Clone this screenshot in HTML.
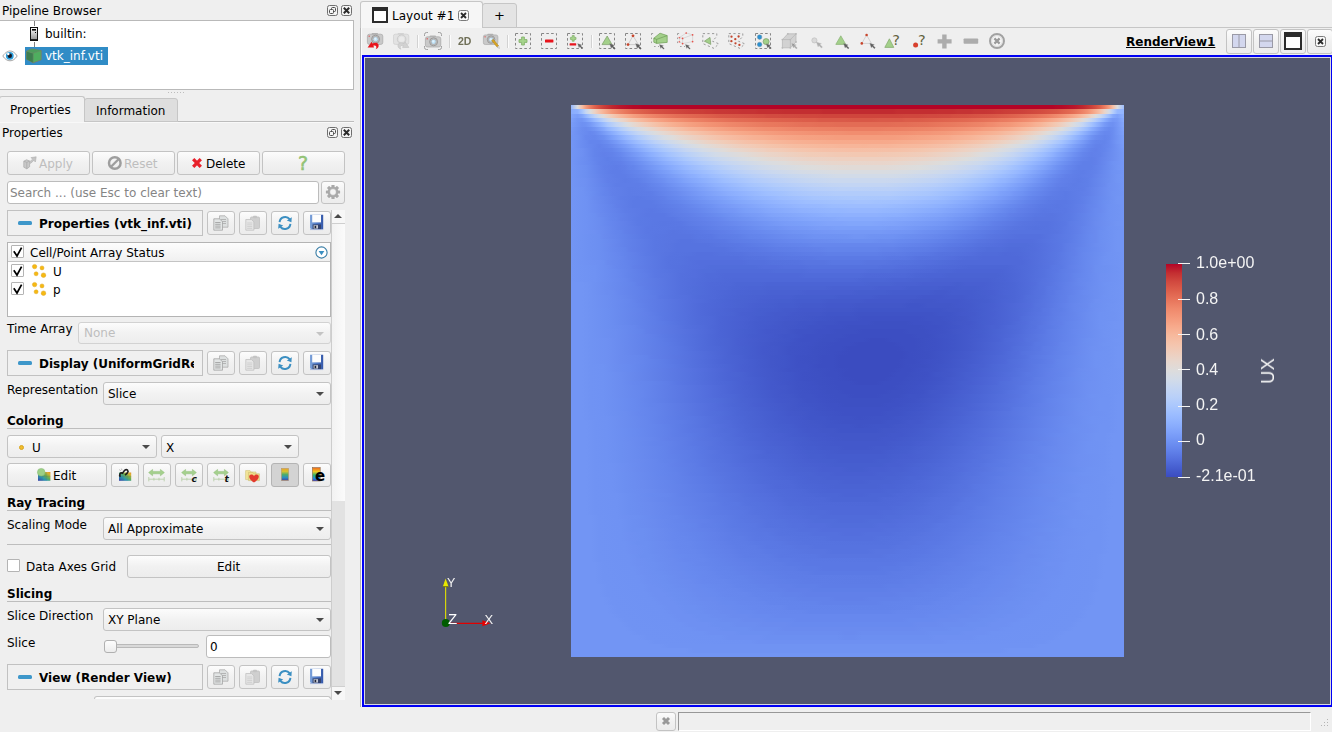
<!DOCTYPE html>
<html><head><meta charset="utf-8"><title>ParaView</title>
<style>
*{box-sizing:border-box}
html,body{margin:0;padding:0}
body{width:1332px;height:732px;overflow:hidden;background:#efefef;font-family:"DejaVu Sans","Liberation Sans",sans-serif;font-size:12px;color:#000;position:relative}
.a{position:absolute}
.t{position:absolute;white-space:nowrap;line-height:14px;margin-top:1px}
.b{font-weight:bold}
.btn{position:absolute;border:1px solid #c3c3c3;border-radius:3px;background:linear-gradient(#fcfcfc,#f1f1f1 50%,#ececec)}
.dis{color:#bebebe}
.cb{position:absolute;width:13px;height:13px;border:1px solid #b4b4b4;background:#fff;border-radius:1px}
.combo{position:absolute;border:1px solid #c3c3c3;border-radius:3px;background:linear-gradient(#fcfcfc,#f2f2f2 50%,#ededed)}
.combo i{position:absolute;right:6px;top:9px;width:0;height:0;border-left:4px solid transparent;border-right:4px solid transparent;border-top:4px solid #4a4a4a}
.hdr{position:absolute;border:1px solid #c1c1c1;background:#f0f0f0}
.sep{position:absolute;height:1px;background:#bdbdbd;left:7px;width:324px}
svg{position:absolute;overflow:visible}
.hm div{position:absolute;left:0;width:100%}
.vt{font-family:"Liberation Sans",sans-serif;font-size:16px;line-height:18px;color:#f4f4f4;will-change:transform}
.gs{will-change:transform}
</style></head><body>

<!-- ===== Pipeline browser ===== -->
<div class="t" style="left:2px;top:3px">Pipeline Browser</div>
<div class="a" style="left:-1px;top:20px;width:355px;height:70px;background:#fff;border:1px solid #b9b9b9"></div>
<div class="a" style="left:34px;top:21px;width:1px;height:5px;background:#808080"></div>
<div class="a" style="left:34px;top:42px;width:1px;height:6px;background:#808080"></div>
<div class="t" style="left:45px;top:26px">builtin:</div>
<div class="a" style="left:25px;top:47px;width:83px;height:18px;background:#308cc6"></div>
<div class="t" style="left:45px;top:48px;color:#fff">vtk_inf.vti</div>
<svg style="left:30px;top:27px" width="8" height="14" viewBox="0 0 8 14">
 <defs><linearGradient id="srv" x1="0" y1="0" x2="0" y2="1"><stop offset="0" stop-color="#fff"/><stop offset="1" stop-color="#8e8e8e"/></linearGradient></defs>
 <rect x=".5" y=".5" width="7" height="13" fill="url(#srv)" stroke="#111"/>
 <rect x="2" y="2" width="4" height="1.6" fill="#000"/>
 <rect x="5" y="5" width="1" height="1" fill="#000"/>
 <rect x="1" y="12" width="6" height="1" fill="#222"/>
</svg>
<svg style="left:26px;top:48px" width="16" height="16" viewBox="0 0 16 16">
 <path d="M.6 3.2L5.6 .9L15.2 2.6L15.2 11.8L7.2 14.8L.6 11.2Z" fill="#4fae5f" stroke="#7b7d6c" stroke-width=".9" stroke-linejoin="round"/>
 <path d="M.6 3.2L7.2 5.2L7.2 14.8L.6 11.2Z" fill="#3d7f50"/>
 <path d="M.6 3.2L5.6 .9L15.2 2.6L7.2 5.2Z" fill="#4c9d5c"/>
 <path d="M.6 3.2L7.2 5.2L15.2 2.6M7.2 5.2L7.2 14.8" fill="none" stroke="#6c8a66" stroke-width=".6"/>
</svg>
<svg style="left:2px;top:50px" width="16" height="12" viewBox="0 0 16 12">
 <path d="M.8 6C3.5 2 6.5 1 8 1C10.5 1 13 2.6 15.2 6C13 9.4 10.5 10.8 8 10.8C5.5 10.8 3 9.4 .8 6Z" fill="#fff" stroke="#9a9a9a" stroke-width=".9"/>
 <circle cx="7.8" cy="5.8" r="3.9" fill="#2b9ddb"/>
 <circle cx="7.8" cy="5.8" r="2.2" fill="#15151f"/>
 <circle cx="6.3" cy="4" r="1.2" fill="#fff"/>
</svg>


<!-- ===== tabs ===== -->
<div class="a" style="left:0;top:121px;width:354px;height:1px;background:#bcbcbc"></div><div class="a" style="left:0;top:122px;width:354px;height:1px;background:#f8f8f8"></div>
<div class="a" style="left:84px;top:98px;width:94px;height:24px;background:#dedede;border:1px solid #c6c6c6;border-radius:3px 3px 0 0"></div>
<div class="a" style="left:-1px;top:96px;width:86px;height:26px;background:#f1f1f1;border:1px solid #c6c6c6;border-bottom:none;border-radius:3px 3px 0 0"></div>
<div class="t" style="left:10px;top:102px">Properties</div>
<div class="t" style="left:96px;top:103px">Information</div>
<div class="t" style="left:2px;top:125px">Properties</div>

<!-- dock buttons -->
<svg style="left:326px;top:4px" width="28" height="13" viewBox="0 0 28 13">
 <rect x="1.5" y="1.5" width="10" height="10" rx="2" fill="#f4f4f4" stroke="#6e6e6e"/>
 <rect x="5.5" y="3.5" width="4" height="4" rx="1" fill="none" stroke="#4a4a4a"/>
 <rect x="3.5" y="5.5" width="4" height="4" rx="1" fill="#f4f4f4" stroke="#4a4a4a"/>
 <rect x="15.5" y="1.5" width="10" height="10" rx="2" fill="#f4f4f4" stroke="#6e6e6e"/>
 <path d="M17.8 3.8l5.4 5.4M23.2 3.8l-5.4 5.4" stroke="#2a2a2a" stroke-width="2"/>
</svg>
<svg style="left:326px;top:126px" width="28" height="13" viewBox="0 0 28 13">
 <rect x="1.5" y="1.5" width="10" height="10" rx="2" fill="#f4f4f4" stroke="#6e6e6e"/>
 <rect x="5.5" y="3.5" width="4" height="4" rx="1" fill="none" stroke="#4a4a4a"/>
 <rect x="3.5" y="5.5" width="4" height="4" rx="1" fill="#f4f4f4" stroke="#4a4a4a"/>
 <rect x="15.5" y="1.5" width="10" height="10" rx="2" fill="#f4f4f4" stroke="#6e6e6e"/>
 <path d="M17.8 3.8l5.4 5.4M23.2 3.8l-5.4 5.4" stroke="#2a2a2a" stroke-width="2"/>
</svg>
<!-- splitter dots -->
<div class="a" style="left:168px;top:92px;width:18px;height:1px;background:repeating-linear-gradient(90deg,#bdbdbd 0 1px,transparent 1px 3px)"></div>

<!-- Apply/Reset/Delete/? -->
<div class="btn" style="left:7px;top:151px;width:83px;height:24px"></div>
<div class="t dis" style="left:39px;top:156px">Apply</div>
<div class="btn" style="left:92px;top:151px;width:83px;height:24px"></div>
<div class="t dis" style="left:124px;top:156px">Reset</div>
<div class="btn" style="left:177px;top:151px;width:83px;height:24px"></div>
<div class="t" style="left:206px;top:156px">Delete</div>
<div class="btn" style="left:262px;top:151px;width:83px;height:24px"></div>

<!-- search -->
<div class="a" style="left:7px;top:181px;width:312px;height:23px;background:#fff;border:1px solid #bcbcbc;border-radius:3px"></div>
<div class="t" style="left:10px;top:185px;color:#858585">Search ... (use Esc to clear text)</div>
<div class="btn" style="left:321px;top:181px;width:24px;height:23px"></div>

<!-- Properties header -->
<div class="hdr" style="left:7px;top:210px;width:196px;height:26px"></div>
<div class="a" style="left:18px;top:221px;width:14px;height:4px;border-radius:1.5px;background:#3e97ca"></div>
<div class="t b" style="left:39px;top:216px">Properties (vtk_inf.vti)</div>
<div class="btn" style="left:207px;top:211px;width:28px;height:24px"></div>
<div class="btn" style="left:239px;top:211px;width:28px;height:24px"></div>
<div class="btn" style="left:271px;top:211px;width:28px;height:24px"></div>
<div class="btn" style="left:303px;top:211px;width:28px;height:24px"></div>

<!-- array list -->
<div class="a" style="left:7px;top:242px;width:324px;height:75px;background:#fff;border:1px solid #b4b4b4"></div>
<div class="a" style="left:8px;top:243px;width:322px;height:19px;background:linear-gradient(#fdfdfd,#f0f0f0);border-bottom:1px solid #c4c4c4"></div>
<div class="cb" style="left:11px;top:245px"></div>
<div class="t" style="left:30px;top:245px">Cell/Point Array Status</div>
<div class="cb" style="left:11px;top:264px"></div>
<div class="t" style="left:53px;top:264px">U</div>
<div class="cb" style="left:11px;top:282px"></div>
<div class="t" style="left:53px;top:282px">p</div>

<!-- time array -->
<div class="t" style="left:7px;top:321px">Time Array</div>
<div class="combo" style="left:78px;top:322px;width:253px;height:22px;border-color:#d2d2d2"><i style="border-top-color:#c4c4c4"></i></div>
<div class="t dis" style="left:84px;top:325px">None</div>

<!-- Display header -->
<div class="hdr" style="left:7px;top:350px;width:196px;height:26px"></div>
<div class="a" style="left:18px;top:361px;width:14px;height:4px;border-radius:1.5px;background:#3e97ca"></div>
<div class="t b" style="left:39px;top:356px;width:154.500px;overflow:hidden">Display (UniformGridRepresentation)</div>
<div class="btn" style="left:207px;top:351px;width:28px;height:24px"></div>
<div class="btn" style="left:239px;top:351px;width:28px;height:24px"></div>
<div class="btn" style="left:271px;top:351px;width:28px;height:24px"></div>
<div class="btn" style="left:303px;top:351px;width:28px;height:24px"></div>

<!-- Representation -->
<div class="t" style="left:7px;top:382px">Representation</div>
<div class="combo" style="left:103px;top:382px;width:228px;height:23px"><i></i></div>
<div class="t" style="left:108px;top:386px">Slice</div>

<!-- Coloring -->
<div class="t b" style="left:7px;top:413px">Coloring</div>
<div class="sep" style="top:428px"></div>
<div class="combo" style="left:7px;top:435px;width:150px;height:23px"><i></i></div>
<div class="a" style="left:19px;top:445px;width:5px;height:5px;border-radius:50%;background:#f0bc2e;border:1px solid #d8a520"></div>
<div class="t" style="left:32px;top:440px">U</div>
<div class="combo" style="left:161px;top:435px;width:138px;height:23px"><i></i></div>
<div class="t" style="left:166px;top:440px">X</div>

<div class="btn" style="left:7px;top:463px;width:100px;height:24px"></div>
<div class="t" style="left:53px;top:468px">Edit</div>
<div class="btn" style="left:111px;top:463px;width:28px;height:24px"></div>
<div class="btn" style="left:143px;top:463px;width:28px;height:24px"></div>
<div class="btn" style="left:175px;top:463px;width:28px;height:24px"></div>
<div class="btn" style="left:207px;top:463px;width:28px;height:24px"></div>
<div class="btn" style="left:239px;top:463px;width:28px;height:24px"></div>
<div class="btn" style="left:271px;top:463px;width:28px;height:24px;background:#d3d3d3;border-color:#b4b4b4"></div>
<div class="btn" style="left:303px;top:463px;width:28px;height:24px"></div>

<!-- Ray tracing -->
<div class="t b" style="left:7px;top:495px">Ray Tracing</div>
<div class="sep" style="top:510px"></div>
<div class="t" style="left:7px;top:517px">Scaling Mode</div>
<div class="combo" style="left:103px;top:517px;width:228px;height:23px"><i></i></div>
<div class="t" style="left:108px;top:521px">All Approximate</div>
<div class="sep" style="top:544px"></div>

<!-- Data axes grid -->
<div class="cb" style="left:7px;top:559px"></div>
<div class="t" style="left:26px;top:559px">Data Axes Grid</div>
<div class="btn" style="left:127px;top:555px;width:204px;height:23px"></div>
<div class="t" style="left:217px;top:559px">Edit</div>

<!-- Slicing -->
<div class="t b" style="left:7px;top:586px">Slicing</div>
<div class="sep" style="top:601px"></div>
<div class="t" style="left:7px;top:608px">Slice Direction</div>
<div class="combo" style="left:103px;top:608px;width:228px;height:23px"><i></i></div>
<div class="t" style="left:108px;top:612px">XY Plane</div>
<div class="t" style="left:7px;top:635px">Slice</div>
<div class="a" style="left:105px;top:644px;width:94px;height:4px;background:#d9d9d9;border:1px solid #b9b9b9;border-radius:2px"></div>
<div class="a" style="left:104px;top:640px;width:13px;height:13px;background:linear-gradient(#fdfdfd,#ececec);border:1px solid #b0b0b0;border-radius:3px"></div>
<div class="a" style="left:206px;top:635px;width:125px;height:23px;background:#fff;border:1px solid #bcbcbc;border-radius:3px"></div>
<div class="t" style="left:210px;top:639px">0</div>

<!-- View header -->
<div class="hdr" style="left:7px;top:664px;width:196px;height:26px"></div>
<div class="a" style="left:18px;top:675px;width:14px;height:4px;border-radius:1.5px;background:#3e97ca"></div>
<div class="t b" style="left:39px;top:670px">View (Render View)</div>
<div class="btn" style="left:207px;top:665px;width:28px;height:24px"></div>
<div class="btn" style="left:239px;top:665px;width:28px;height:24px"></div>
<div class="btn" style="left:271px;top:665px;width:28px;height:24px"></div>
<div class="btn" style="left:303px;top:665px;width:28px;height:24px"></div>
<div class="a" style="left:94px;top:696px;width:237px;height:3px;border:1px solid #c3c3c3;border-bottom:none;border-radius:3px 3px 0 0;background:#fcfcfc"></div>
<!-- apply icon -->
<svg style="left:23px;top:156px" width="14" height="14" viewBox="0 0 14 14">
 <path d="M.8 5.2L3.6 3.8L6.6 5L6.6 10.8L3.8 12.8L.8 11.2Z" fill="#c9c9c9" stroke="#adadad" stroke-width=".8"/>
 <path d="M.8 5.2L3.8 6.4L6.6 5M3.8 6.4L3.8 12.8" fill="none" stroke="#a9a9a9" stroke-width=".7"/>
 <path d="M6.2 6.2L9.6 3.2L8 1.6L13.2 .8L12.4 6L10.8 4.4L7.6 7.4Z" fill="#c4c4c4" stroke="#b0b0b0" stroke-width=".6"/>
</svg>
<!-- reset icon -->
<svg style="left:107px;top:155px" width="16" height="16" viewBox="0 0 16 16">
 <circle cx="7.8" cy="8" r="5.8" fill="none" stroke="#9e9e9e" stroke-width="2.5"/>
 <path d="M11.8 4L3.8 12" stroke="#9e9e9e" stroke-width="2.4"/>
</svg>
<!-- delete icon -->
<svg style="left:191px;top:157px" width="12" height="12" viewBox="0 0 12 12">
 <path d="M2.2 2.2L9.8 9.8M9.8 2.2L2.2 9.8" stroke="#e8212b" stroke-width="3.3" stroke-linecap="butt"/>
</svg>
<!-- help ? -->
<div class="t" style="left:298px;top:152px;font-size:19px;line-height:20px;color:#96c878;-webkit-text-stroke:.5px #8cbc6e">?</div>
<!-- gear -->
<svg style="left:325px;top:184px" width="16" height="16" viewBox="-8 -8 16 16">
 <g fill="#a9a9a9">
  <rect x="-1.600" y="-7.100" width="3.200" height="14.200" rx=".7"/>
  <rect x="-1.600" y="-7.100" width="3.200" height="14.200" rx=".7" transform="rotate(45)"/>
  <rect x="-1.600" y="-7.100" width="3.200" height="14.200" rx=".7" transform="rotate(90)"/>
  <rect x="-1.600" y="-7.100" width="3.200" height="14.200" rx=".7" transform="rotate(135)"/>
  <circle r="5.300"/>
 </g>
 <circle r="3.400" fill="#f3f3f3"/>
 <circle r="3.400" fill="none" stroke="#8f8f8f" stroke-width=".5"/>
</svg>
<svg style="left:213px;top:215px" width="16" height="16" viewBox="0 0 16 16">
 <path d="M6.5 .8h5.5l3 3v8.400h-8.500z" fill="#dde0e0" stroke="#a6a6a6" stroke-width=".7"/>
 <path d="M8 4.500h5M8 6.500h5M8 8.500h5" stroke="#aaa" stroke-width=".8"/>
 <path d="M.8 3.800h5.700l3 3v8.400h-8.700z" fill="#e2e5e5" stroke="#9c9c9c" stroke-width=".7"/>
 <path d="M2.200 7.500h5.400M2.200 9.300h5.400M2.200 11.100h5.400M2.200 12.900h5.400" stroke="#9a9a9a" stroke-width=".8"/>
</svg>
<svg style="left:245px;top:215px" width="16" height="16" viewBox="0 0 16 16">
 <rect x="5.500" y="2" width="9" height="11.500" rx="1" fill="#cfcfcf" stroke="#c0c0c0" stroke-width=".8"/>
 <rect x="8" y=".8" width="4" height="2.400" rx=".8" fill="#c4c4c4"/>
 <path d="M.8 4.500h5.700l2.400 2.400v8.300h-8.100z" fill="#e6e6e6" stroke="#c2c2c2" stroke-width=".8"/>
 <path d="M2.200 8h5M2.200 9.800h5M2.200 11.600h5M2.200 13.400h5" stroke="#cacaca" stroke-width=".8"/>
</svg>
<svg style="left:277px;top:215px" width="16" height="16" viewBox="0 0 16 16">
 <path d="M2.600 7.200A5.600 5.600 0 0 1 12.600 4.200" fill="none" stroke="#3b8fc2" stroke-width="2"/>
 <path d="M14.800 2.200L14.400 7.200L9.800 5.400Z" fill="#3b8fc2"/>
 <path d="M13.400 8.800A5.600 5.600 0 0 1 3.400 11.800" fill="none" stroke="#3b8fc2" stroke-width="2"/>
 <path d="M1.200 13.800L1.600 8.800L6.200 10.600Z" fill="#3b8fc2"/>
</svg>
<svg style="left:309px;top:214px" width="16" height="16" viewBox="0 0 16 16">
 <path d="M1 .8h13.200v14.400h-12l-1.200-1.200z" fill="url(#sav)"/>
 <rect x="3.200" y=".8" width="8.800" height="7.600" fill="#fdfdfd"/>
 <rect x="3.600" y="10.400" width="8.400" height="4.800" fill="#34436e"/>
 <rect x="4.600" y="11.200" width="4.400" height="3.400" fill="#c9ccd6"/><rect x="5.600" y="11.800" width="1.600" height="2.400" fill="#1e2436"/>
 <path d="M1 15.600h13.200" stroke="#9eb0d8" stroke-width=".8"/>
</svg>
<svg style="left:213px;top:355px" width="16" height="16" viewBox="0 0 16 16">
 <path d="M6.5 .8h5.5l3 3v8.400h-8.500z" fill="#dde0e0" stroke="#a6a6a6" stroke-width=".7"/>
 <path d="M8 4.500h5M8 6.500h5M8 8.500h5" stroke="#aaa" stroke-width=".8"/>
 <path d="M.8 3.800h5.700l3 3v8.400h-8.700z" fill="#e2e5e5" stroke="#9c9c9c" stroke-width=".7"/>
 <path d="M2.200 7.500h5.400M2.200 9.300h5.400M2.200 11.100h5.400M2.200 12.900h5.400" stroke="#9a9a9a" stroke-width=".8"/>
</svg>
<svg style="left:245px;top:355px" width="16" height="16" viewBox="0 0 16 16">
 <rect x="5.500" y="2" width="9" height="11.500" rx="1" fill="#cfcfcf" stroke="#c0c0c0" stroke-width=".8"/>
 <rect x="8" y=".8" width="4" height="2.400" rx=".8" fill="#c4c4c4"/>
 <path d="M.8 4.500h5.700l2.400 2.400v8.300h-8.100z" fill="#e6e6e6" stroke="#c2c2c2" stroke-width=".8"/>
 <path d="M2.200 8h5M2.200 9.800h5M2.200 11.600h5M2.200 13.400h5" stroke="#cacaca" stroke-width=".8"/>
</svg>
<svg style="left:277px;top:355px" width="16" height="16" viewBox="0 0 16 16">
 <path d="M2.600 7.200A5.600 5.600 0 0 1 12.600 4.200" fill="none" stroke="#3b8fc2" stroke-width="2"/>
 <path d="M14.800 2.200L14.400 7.200L9.800 5.400Z" fill="#3b8fc2"/>
 <path d="M13.400 8.800A5.600 5.600 0 0 1 3.400 11.800" fill="none" stroke="#3b8fc2" stroke-width="2"/>
 <path d="M1.200 13.800L1.600 8.800L6.200 10.600Z" fill="#3b8fc2"/>
</svg>
<svg style="left:309px;top:354px" width="16" height="16" viewBox="0 0 16 16">
 <path d="M1 .8h13.200v14.400h-12l-1.200-1.200z" fill="url(#sav)"/>
 <rect x="3.200" y=".8" width="8.800" height="7.600" fill="#fdfdfd"/>
 <rect x="3.600" y="10.400" width="8.400" height="4.800" fill="#34436e"/>
 <rect x="4.600" y="11.200" width="4.400" height="3.400" fill="#c9ccd6"/><rect x="5.600" y="11.800" width="1.600" height="2.400" fill="#1e2436"/>
 <path d="M1 15.600h13.200" stroke="#9eb0d8" stroke-width=".8"/>
</svg>
<svg style="left:213px;top:669px" width="16" height="16" viewBox="0 0 16 16">
 <path d="M6.5 .8h5.5l3 3v8.400h-8.500z" fill="#dde0e0" stroke="#a6a6a6" stroke-width=".7"/>
 <path d="M8 4.500h5M8 6.500h5M8 8.500h5" stroke="#aaa" stroke-width=".8"/>
 <path d="M.8 3.800h5.700l3 3v8.400h-8.700z" fill="#e2e5e5" stroke="#9c9c9c" stroke-width=".7"/>
 <path d="M2.200 7.500h5.400M2.200 9.300h5.400M2.200 11.100h5.400M2.200 12.900h5.400" stroke="#9a9a9a" stroke-width=".8"/>
</svg>
<svg style="left:245px;top:669px" width="16" height="16" viewBox="0 0 16 16">
 <rect x="5.500" y="2" width="9" height="11.500" rx="1" fill="#cfcfcf" stroke="#c0c0c0" stroke-width=".8"/>
 <rect x="8" y=".8" width="4" height="2.400" rx=".8" fill="#c4c4c4"/>
 <path d="M.8 4.500h5.700l2.400 2.400v8.300h-8.100z" fill="#e6e6e6" stroke="#c2c2c2" stroke-width=".8"/>
 <path d="M2.200 8h5M2.200 9.800h5M2.200 11.600h5M2.200 13.400h5" stroke="#cacaca" stroke-width=".8"/>
</svg>
<svg style="left:277px;top:669px" width="16" height="16" viewBox="0 0 16 16">
 <path d="M2.600 7.200A5.600 5.600 0 0 1 12.600 4.200" fill="none" stroke="#3b8fc2" stroke-width="2"/>
 <path d="M14.800 2.200L14.400 7.200L9.800 5.400Z" fill="#3b8fc2"/>
 <path d="M13.400 8.800A5.600 5.600 0 0 1 3.400 11.800" fill="none" stroke="#3b8fc2" stroke-width="2"/>
 <path d="M1.200 13.800L1.600 8.800L6.200 10.600Z" fill="#3b8fc2"/>
</svg>
<svg style="left:309px;top:668px" width="16" height="16" viewBox="0 0 16 16">
 <path d="M1 .8h13.200v14.400h-12l-1.200-1.200z" fill="url(#sav)"/>
 <rect x="3.200" y=".8" width="8.800" height="7.600" fill="#fdfdfd"/>
 <rect x="3.600" y="10.400" width="8.400" height="4.800" fill="#34436e"/>
 <rect x="4.600" y="11.200" width="4.400" height="3.400" fill="#c9ccd6"/><rect x="5.600" y="11.800" width="1.600" height="2.400" fill="#1e2436"/>
 <path d="M1 15.600h13.200" stroke="#9eb0d8" stroke-width=".8"/>
</svg>
<!-- coloring row icons -->
<svg width="0" height="0"><defs>
 <linearGradient id="sav" x1="0" y1="0" x2="1" y2="0"><stop offset="0" stop-color="#7fa4da"/><stop offset=".5" stop-color="#4f7ac8"/><stop offset="1" stop-color="#3558a8"/></linearGradient>
 <linearGradient id="rbw" x1="0" y1="1" x2="1" y2="0"><stop offset="0" stop-color="#3a3fa8"/><stop offset=".35" stop-color="#2b9ab0"/><stop offset=".6" stop-color="#6ab04c"/><stop offset=".85" stop-color="#e0b030"/><stop offset="1" stop-color="#e08a2a"/></linearGradient>
 <linearGradient id="rbv" x1="0" y1="0" x2="0" y2="1"><stop offset="0" stop-color="#e9a32a"/><stop offset=".25" stop-color="#d6c230"/><stop offset=".5" stop-color="#4fae6a"/><stop offset=".75" stop-color="#2b8fc0"/><stop offset="1" stop-color="#4a3f9e"/></linearGradient>
 <linearGradient id="rbv2" x1="0" y1="0" x2="0" y2="1"><stop offset="0" stop-color="#f0641e"/><stop offset=".3" stop-color="#f0c81e"/><stop offset=".55" stop-color="#2fb46a"/><stop offset=".8" stop-color="#1e8ce0"/><stop offset="1" stop-color="#3a3ac8"/></linearGradient>
</defs></svg>
<svg style="left:37px;top:468px" width="14" height="13" viewBox="0 0 14 13">
 <rect x="1" y="4" width="12.400" height="8.800" fill="url(#rbw)"/>
 <path d="M5 4v8.800M9.200 4v8.800M1 8.400h12.400" stroke="#5a6a7a" stroke-width=".4" opacity=".6"/>
 <circle cx="4.200" cy="4.200" r="3.800" fill="#9ccf86" stroke="#86b872" stroke-width=".5"/>
</svg>
<svg style="left:118px;top:468px" width="14" height="13" viewBox="0 0 14 13">
 <rect x="1" y="4.500" width="12.200" height="8.300" fill="url(#rbw)"/>
 <path d="M5 4.500v8.300M9.200 4.500v8.300M1 8.600h12.200" stroke="#5a6a7a" stroke-width=".4" opacity=".6"/>
 <path d="M2.600 8.600C.6 7 2.400 4 4.600 5.200M4.200 5.800C6 3 7.500 .4 9.600 2.200C11.200 3.800 8.500 6 7 7" fill="none" stroke="#1e1e1e" stroke-width="1.600"/>
 <path d="M1.200 1.600l1.600 1.200M3.400 .6l.6 1.600" stroke="#8a8a8a" stroke-width=".6"/>
</svg>
<svg style="left:148px;top:469px" width="17" height="13" viewBox="0 0 17 13">
 <path d="M.6 3.600L4.600 .4V2.400H12.400V.4L16.400 3.600L12.400 6.800V4.800H4.600V6.800Z" fill="#a4d08c" stroke="#8fbd78" stroke-width=".5"/>
 <path d="M.8 10.200H16.200M.8 8v4.400M16.200 8v4.400M5.900 8.800v2.800M11 8.800v2.800" stroke="#b9cfa9" stroke-width=".9" fill="none"/>
</svg>
<svg style="left:181px;top:469px" width="17" height="13" viewBox="0 0 17 13">
 <path d="M.6 3.600L4.600 .4V2.400H11.400V.4L15.400 3.600L11.400 6.800V4.800H4.600V6.800Z" fill="#a4d08c" stroke="#8fbd78" stroke-width=".5"/>
 <path d="M.8 10.200H15.200M.8 8v4.400M15.200 8v4.400M5.900 8.800v2.800" stroke="#b9cfa9" stroke-width=".9" fill="none"/>
 <text x="10.400" y="12.600" font-family="DejaVu Sans,sans-serif" font-weight="bold" font-style="italic" font-size="9" fill="#111">c</text>
</svg>
<svg style="left:213px;top:469px" width="17" height="13" viewBox="0 0 17 13">
 <path d="M.6 3.600L4.600 .4V2.400H11.400V.4L15.400 3.600L11.400 6.800V4.800H4.600V6.800Z" fill="#a4d08c" stroke="#8fbd78" stroke-width=".5"/>
 <path d="M.8 10.200H15.200M.8 8v4.400M15.200 8v4.400M5.900 8.800v2.800" stroke="#b9cfa9" stroke-width=".9" fill="none"/>
 <text x="11.400" y="12.600" font-family="DejaVu Sans,sans-serif" font-weight="bold" font-style="italic" font-size="9" fill="#111">t</text>
</svg>
<svg style="left:245px;top:469px" width="16" height="14" viewBox="0 0 16 14">
 <path d="M.6 1.600h4.400l1 1.400h5v7.600h-10.400z" fill="#f3e59a" stroke="#cfc27a" stroke-width=".6"/>
 <path d="M3.400 3.400h4.400l1 1.400h5.600v6.800h-11z" fill="#efe08a" stroke="#c9bb70" stroke-width=".6"/>
 <path d="M9 13.600C5.200 10.800 4.200 9 4.200 7.400C4.200 5.200 7.400 4.600 9 7C10.600 4.600 13.800 5.200 13.800 7.400C13.800 9 12.800 10.800 9 13.600Z" fill="#e23a2e"/>
</svg>
<svg style="left:281px;top:468px" width="8" height="13" viewBox="0 0 8 13">
 <rect x=".4" y=".4" width="7.200" height="12.200" fill="url(#rbv)" stroke="#b89a6a" stroke-width=".6"/>
</svg>
<svg style="left:312px;top:467px" width="14" height="15" viewBox="0 0 14 15">
 <rect x=".4" y=".6" width="7.800" height="13.400" fill="url(#rbv2)" stroke="#8a6a4a" stroke-width=".6"/>
 <text x="3" y="14" font-family="DejaVu Sans,sans-serif" font-weight="bold" font-size="15" fill="#000">e</text>
</svg>
<svg style="left:11px;top:245px" width="13" height="13" viewBox="0 0 13 13"><path d="M2.800 6.200L6 11L10.600 2.600" fill="none" stroke="#000" stroke-width="1.700" stroke-linejoin="miter"/></svg>
<svg style="left:11px;top:264px" width="13" height="13" viewBox="0 0 13 13"><path d="M2.800 6.200L6 11L10.600 2.600" fill="none" stroke="#000" stroke-width="1.700" stroke-linejoin="miter"/></svg>
<svg style="left:11px;top:282px" width="13" height="13" viewBox="0 0 13 13"><path d="M2.800 6.200L6 11L10.600 2.600" fill="none" stroke="#000" stroke-width="1.700" stroke-linejoin="miter"/></svg>
<svg style="left:32px;top:264px" width="14" height="13" viewBox="0 0 14 13"><g fill="#f6b912" stroke="#dfa626" stroke-width=".5"><circle cx="2.600" cy="2.600" r="2.200"/><circle cx="10" cy="3.900" r="2"/><circle cx="4.100" cy="9.800" r="2"/><circle cx="11.500" cy="11.200" r="2.300"/></g></svg>
<svg style="left:32px;top:282px" width="14" height="13" viewBox="0 0 14 13"><g fill="#f6b912" stroke="#dfa626" stroke-width=".5"><circle cx="2.600" cy="2.600" r="2.200"/><circle cx="10" cy="3.900" r="2"/><circle cx="4.100" cy="9.800" r="2"/><circle cx="11.500" cy="11.200" r="2.300"/></g></svg>
<svg style="left:315px;top:246px" width="13" height="13" viewBox="0 0 13 13"><circle cx="6.500" cy="6.500" r="5.600" fill="#fff" stroke="#3a7ea6" stroke-width="1.100"/><path d="M3.600 5L9.400 5L6.500 9.200Z" fill="#3a8fc2"/></svg>

<!-- scroll bar -->
<div class="a" style="left:331px;top:210px;width:14px;height:490px;background:#e2e2e2;border-left:1px solid #cdcdcd"></div>
<div class="a" style="left:332px;top:210px;width:13px;height:14px;background:#f7f7f7;border-bottom:1px solid #cfcfcf"></div>
<div class="a" style="left:332px;top:224px;width:13px;height:277px;background:linear-gradient(90deg,#f2f2f2,#fbfbfb)"></div>
<div class="a" style="left:332px;top:686px;width:13px;height:14px;background:#f7f7f7;border-top:1px solid #cfcfcf"></div>
<div class="a" style="left:334px;top:214px;width:0;height:0;border-left:4px solid transparent;border-right:4px solid transparent;border-bottom:4px solid #4a4a4a"></div>
<div class="a" style="left:334px;top:691px;width:0;height:0;border-left:4px solid transparent;border-right:4px solid transparent;border-top:4px solid #4a4a4a"></div>



<!-- ===== central ===== -->
<!-- tab widget -->
<div class="a" style="left:360px;top:27px;width:972px;height:1px;background:#c6c6c6"></div>
<div class="a" style="left:360px;top:3px;width:1px;height:704px;background:#b6b6b6"></div><div class="a" style="left:361px;top:28px;width:1px;height:679px;background:#fbfbfb"></div>
<div class="a" style="left:482px;top:3px;width:35px;height:25px;background:#e4e4e4;border:1px solid #c6c6c6;border-radius:3px 3px 0 0"></div>
<div class="a" style="left:360px;top:1px;width:123px;height:27px;background:#f6f6f6;border:1px solid #c6c6c6;border-bottom:none;border-radius:3px 3px 0 0"></div>
<div class="t" style="left:392px;top:8px">Layout #1</div>
<div class="t" style="left:494px;top:8px;font-size:13px">+</div>
<svg style="left:372px;top:7px" width="16" height="16" viewBox="0 0 16 16"><rect x="1" y="1" width="14" height="14" fill="#fff" stroke="#2b2b2b" stroke-width="2"/><rect x="0" y="0" width="16" height="4" fill="#2b2b2b"/></svg>
<svg style="left:458px;top:10px" width="11" height="11" viewBox="0 0 11 11"><rect x=".5" y=".5" width="10" height="10" rx="2" fill="#f8f8f8" stroke="#7a7a7a"/><path d="M3 3l5 5M8 3l-5 5" stroke="#2a2a2a" stroke-width="1.8"/></svg>

<!-- toolbar text -->
<div class="t b gs" style="left:458px;top:33px;font-size:10.500px;color:#707058;font-family:'Liberation Sans',sans-serif">2D</div>
<div class="t b" style="left:1126px;top:34px;text-decoration:underline">RenderView1</div>
<div class="btn" style="left:1226px;top:29px;width:26px;height:25px"></div>
<div class="btn" style="left:1253px;top:29px;width:26px;height:25px"></div>
<div class="btn" style="left:1280px;top:29px;width:26px;height:25px"></div>
<div class="btn" style="left:1307px;top:29px;width:26px;height:25px"></div>
<svg width="0" height="0"><defs>
 <g id="cam">
  <rect x="4.600" y="0" width="6.400" height="2" rx=".8" fill="#b5b5b5"/>
  <rect x=".4" y="1.200" width="15.400" height="10.200" rx="2" fill="#c9c9c9" stroke="#a8a8a8" stroke-width=".7"/>
  <circle cx="8.600" cy="6.200" r="4" fill="#bdbdbd" stroke="#969696" stroke-width=".9"/>
  <circle cx="8.600" cy="6.200" r="2.700" fill="#a9a9a9"/>
  <circle cx="8.600" cy="6.200" r="2.200" fill="#bfe1f6"/>
  <circle cx="8.300" cy="5.800" r="1.100" fill="#e4f3fc"/>
  <rect x="1.600" y="2.600" width="1.200" height="1.200" fill="#e05050"/>
 </g>
 <g id="camd" opacity=".45">
  <rect x="4.600" y="0" width="6.400" height="2" rx=".8" fill="#b5b5b5"/>
  <rect x=".4" y="1.200" width="15.400" height="10.200" rx="2" fill="#d4d4d4" stroke="#a8a8a8" stroke-width=".7"/>
  <circle cx="8.600" cy="6.200" r="4.300" fill="#cfcfcf" stroke="#9f9f9f" stroke-width="1"/>
  <circle cx="8.600" cy="6.200" r="2.600" fill="#e6e6e6"/>
 </g>
 <path id="cur" d="M0 0L4.800 1.600L3.400 2.400L5.800 4.800L4.800 5.800L2.400 3.400L1.600 4.800Z" fill="#5e5e5e" stroke="#8a8a8a" stroke-width=".3"/>
 <rect id="dbox" x=".5" y=".5" width="15" height="15" fill="none" stroke="#868686" stroke-width="1" stroke-dasharray="2.600 2.200"/>
</defs></svg>

<!-- 1 camera undo -->
<svg style="left:367px;top:33px" width="17" height="17" viewBox="0 0 17 17">
 <use href="#cam"/>
 <path d="M10.400 10.200C12.800 12 11.600 15.400 8.600 16.200C10.200 13.800 9.200 12.200 6.400 12.400L7 14.600L.6 14.400L4.600 8.800L5.400 10.600C7.400 9.600 9 9.400 10.400 10.200Z" fill="#e8141c"/>
</svg>
<!-- 2 camera redo (disabled) -->
<svg style="left:393px;top:33px" width="17" height="17" viewBox="0 0 17 17">
 <use href="#camd"/>
 <path d="M6.200 10.200C3.800 12 5 15.400 8 16.200C6.400 13.800 7.400 12.200 10.200 12.400L9.600 14.600L16 14.400L12 8.800L11.200 10.600C9.200 9.600 7.600 9.400 6.200 10.200Z" fill="#d2d2d2" stroke="#bdbdbd" stroke-width=".5"/>
</svg>
<div class="a" style="left:417px;top:35px;width:1px;height:13px;background:#d2d2d2"></div><div class="a" style="left:418px;top:35px;width:1px;height:13px;background:#fcfcfc"></div>
<!-- 3 camera brackets -->
<svg style="left:424px;top:32px" width="18" height="18" viewBox="0 0 18 18">
 <path d="M.5 4V2.500Q.5 .5 2.500 .5H4M14 .5H15.500Q17.500 .5 17.500 2.500V4M17.500 14V15.500Q17.500 17.500 15.500 17.500H14M4 17.500H2.500Q.5 17.500 .5 15.500V14" fill="none" stroke="#979797" stroke-width=".9"/>
 <g transform="translate(1,3.600)"><use href="#cam"/></g>
</svg>
<div class="a" style="left:449px;top:35px;width:1px;height:13px;background:#d2d2d2"></div><div class="a" style="left:450px;top:35px;width:1px;height:13px;background:#fcfcfc"></div>
<!-- 5 camera pencil -->
<svg style="left:483px;top:33px" width="17" height="17" viewBox="0 0 17 17">
 <g transform="translate(0,.8) scale(.94)"><use href="#cam"/></g>
 <path d="M8.600 7.600L10.200 6.200L15.600 12.800L14.200 14.200Z" fill="#d9a521" stroke="#a97f1e" stroke-width=".5"/>
 <path d="M14.200 14.200L15.600 12.800L16.400 15.400Z" fill="#fff" stroke="#888" stroke-width=".4"/>
</svg>
<div class="a" style="left:507px;top:35px;width:1px;height:13px;background:#d2d2d2"></div><div class="a" style="left:508px;top:35px;width:1px;height:13px;background:#fcfcfc"></div>
<!-- 6 add -->
<svg style="left:515px;top:33px" width="16" height="16" viewBox="0 0 16 16">
 <use href="#dbox"/>
 <path d="M6.600 4H9.400V6.600H12V9.400H9.400V12H6.600V9.400H4V6.600H6.600Z" fill="#a6d48c" stroke="#7fae66" stroke-width=".8"/>
</svg>
<!-- 7 subtract -->
<svg style="left:541px;top:33px" width="16" height="16" viewBox="0 0 16 16">
 <use href="#dbox"/>
 <rect x="4" y="6.400" width="8.400" height="3.200" rx=".6" fill="#e8141c"/>
</svg>
<!-- 8 toggle -->
<svg style="left:567px;top:33px" width="16" height="16" viewBox="0 0 16 16">
 <use href="#dbox"/>
 <path d="M5.200 2.600H7.200V4.400H9V6.400H7.200V8.200H5.200V6.400H3.400V4.400H5.200Z" fill="#a6d48c" stroke="#7fae66" stroke-width=".7"/>
 <rect x="2.600" y="10.200" width="6.600" height="2.400" rx=".5" fill="#e8141c"/>
 <g transform="translate(10.600,10.600) scale(.88)"><use href="#cur"/></g>
</svg>
<div class="a" style="left:591px;top:35px;width:1px;height:13px;background:#d2d2d2"></div><div class="a" style="left:592px;top:35px;width:1px;height:13px;background:#fcfcfc"></div>
<!-- 9 select cells on -->
<svg style="left:599px;top:33px" width="16" height="16" viewBox="0 0 16 16">
 <use href="#dbox"/>
 <path d="M8.200 3L13 11.600H3Z" fill="#a3d08a" stroke="#7d9d69" stroke-width=".7"/>
 <g transform="translate(10.600,10.600)"><use href="#cur"/></g>
</svg>
<!-- 10 select points on -->
<svg style="left:625px;top:33px" width="16" height="16" viewBox="0 0 16 16">
 <use href="#dbox"/>
 <path d="M8 2.800L13.400 11.600H3Z" fill="none" stroke="#b5b5b5" stroke-width=".6"/>
 <circle cx="8" cy="2.800" r="1.400" fill="#c8452b"/><circle cx="3" cy="11.600" r="1.400" fill="#c8452b"/>
 <g transform="translate(10.600,10.600)"><use href="#cur"/></g>
</svg>
<!-- 11 cells through -->
<svg style="left:651px;top:32px" width="17" height="17" viewBox="0 0 17 17">
 <path d="M.5 1.500V12.500M.5 1.500H4M3 14.500H8" fill="none" stroke="#8e8e8e" stroke-width=".8" stroke-dasharray="1.600 2.400"/>
 <path d="M2.800 6.200L9 1.200L16.200 3.600V10.400L5.600 11.400L2.800 10.200Z" fill="#a3d08a" stroke="#6f9e56" stroke-width=".7"/>
 <path d="M2.800 6.200L5.600 7.400L16.200 3.600M5.600 7.400V11.400" fill="none" stroke="#6f9e56" stroke-width=".7"/>
 <g transform="translate(8.400,12.400) scale(.85)"><use href="#cur"/></g>
</svg>
<!-- 12 points through -->
<svg style="left:677px;top:32px" width="17" height="17" viewBox="0 0 17 17">
 <path d="M.5 1.500V12.500M.5 1.500H4M3 14.500H8" fill="none" stroke="#8e8e8e" stroke-width=".8" stroke-dasharray="1.600 2.400"/>
 <path d="M2.400 5.600L9.200 1L15.600 2.800V9.600L5.600 11.600L2.400 9.800ZM5.600 6.400V11.600M5.600 6.400L15.600 2.800M2.400 5.600L5.600 6.400" fill="none" stroke="#c9c9c9" stroke-width=".6"/>
 <g fill="#e8524a"><circle cx="9.200" cy="1" r=".85"/><circle cx="15.600" cy="2.800" r=".85"/><circle cx="15.600" cy="9.600" r=".85"/><circle cx="5.600" cy="6.400" r=".85"/><circle cx="5.600" cy="11.600" r=".85"/><rect x="1.600" y="4.900" width="1.500" height="1.500" opacity=".8"/><rect x="1.600" y="9.100" width="1.500" height="1.500" opacity=".8"/></g>
 <g transform="translate(8.400,12.400) scale(.85)"><use href="#cur"/></g>
</svg>
<!-- 13 cells polygon -->
<svg style="left:702px;top:33px" width="18" height="16" viewBox="0 0 18 16">
 <path d="M.8 .6H14.800V3.400L10.400 8.200L16.800 10.800L12 15.400L.8 10.600Z" fill="none" stroke="#8a8a8a" stroke-width=".85" stroke-dasharray="2.200 2.400"/>
 <path d="M2.400 8.200L8 4.400L8.800 11.400Z" fill="#a3d08a" stroke="#7d9d69" stroke-width=".7"/>
</svg>
<!-- 14 points polygon -->
<svg style="left:728px;top:33px" width="18" height="16" viewBox="0 0 18 16">
 <path d="M.8 .6H14.800V3.400L10.400 8.200L16.800 10.800L12 15.400L.8 10.600Z" fill="none" stroke="#8a8a8a" stroke-width=".85" stroke-dasharray="2.200 2.400"/>
 <g fill="#c2452d"><circle cx="3.500" cy="3.700" r="1.150"/><circle cx="10.600" cy="3.500" r="1.150"/><circle cx="7.300" cy="6.200" r="1.150"/><circle cx="3.400" cy="8.200" r="1.150"/><circle cx="7.500" cy="10.300" r="1.150"/><circle cx="11.400" cy="11.900" r="1.150"/></g>
</svg>
<!-- 15 select block -->
<svg style="left:755px;top:33px" width="16" height="16" viewBox="0 0 16 16">
 <use href="#dbox"/>
 <circle cx="4.600" cy="4.100" r="2.300" fill="#2a90d2" stroke="#6a8a9a" stroke-width=".4"/><circle cx="4.600" cy="11.500" r="2.300" fill="#2a90d2" stroke="#6a8a9a" stroke-width=".4"/>
 <circle cx="11.100" cy="8.600" r="3" fill="#a3d08a" stroke="#7d9d69" stroke-width=".7"/>
 <g transform="translate(11.200,10.800) scale(.9)"><use href="#cur"/></g>
</svg>
<!-- 16 gray cube -->
<svg style="left:781px;top:33px" width="17" height="16" viewBox="0 0 17 16">
 <path d="M1.400 6.600L6.800 .8L15 .8L15 9L9.400 14.800L1.400 14.800Z" fill="#d2d2d2" stroke="#b4b4b4" stroke-width=".7"/>
 <path d="M1.400 6.600H9.400V14.800M9.400 6.600L15 .8" fill="none" stroke="#b4b4b4" stroke-width=".7"/>
 <g fill="#b9b9b9"><circle cx="1.400" cy="6.600" r=".9"/><circle cx="9.400" cy="6.600" r=".9"/><circle cx="1.400" cy="14.800" r=".9"/><circle cx="9.400" cy="14.800" r=".9"/><circle cx="6.800" cy=".8" r=".9"/><circle cx="15" cy=".8" r=".9"/><circle cx="15" cy="9" r=".9"/></g>
 <g transform="translate(10.800,10.400) scale(.95)" opacity=".5"><use href="#cur"/></g>
</svg>
<!-- 17 hover point -->
<svg style="left:811px;top:37px" width="13" height="12" viewBox="0 0 13 12">
 <circle cx="3.400" cy="3.400" r="2.600" fill="#d9d9d9" stroke="#bcbcbc" stroke-width=".6"/>
 <g transform="translate(5.400,5) scale(1.050)" opacity=".45"><use href="#cur"/></g>
</svg>
<!-- 18 triangle cursor -->
<svg style="left:835px;top:35px" width="15" height="14" viewBox="0 0 15 14">
 <path d="M5.800 .8L10.800 9.400H.8Z" fill="#a3d08a" stroke="#8ab274" stroke-width=".7"/>
 <g transform="translate(8.600,8.400) scale(.95)"><use href="#cur"/></g>
</svg>
<!-- 19 points triangle cursor -->
<svg style="left:860px;top:33px" width="16" height="16" viewBox="0 0 16 16">
 <path d="M6.600 2L11.400 10.400H1.800Z" fill="none" stroke="#bdbdbd" stroke-width=".6"/>
 <circle cx="6.600" cy="2" r="1.300" fill="#c8452b"/><circle cx="1.800" cy="10.400" r="1.300" fill="#c8452b"/>
 <g transform="translate(9.800,10.200) scale(.95)"><use href="#cur"/></g>
</svg>
<!-- 20 triangle ? -->
<svg style="left:884px;top:32px" width="17" height="17" viewBox="0 0 17 17">
 <path d="M5.400 6.800L9.800 15.400H.8Z" fill="#a3d08a" stroke="#7fa669" stroke-width=".7"/>
 <text x="8.200" y="13" font-family="DejaVu Sans,sans-serif" font-size="14.500" fill="#62623e">?</text>
</svg>
<!-- 21 dot ? -->
<svg style="left:911px;top:32px" width="17" height="17" viewBox="0 0 17 17">
 <circle cx="4.600" cy="13" r="2.500" fill="#d8402e"/>
 <text x="7" y="13" font-family="DejaVu Sans,sans-serif" font-size="14.500" fill="#62623e">?</text>
</svg>
<!-- 22 plus -->
<svg style="left:937px;top:34px" width="15" height="15" viewBox="0 0 15 15">
 <path d="M5.200 .4H9.600V5.200H14.600V9.400H9.600V14.400H5.200V9.400H.6V5.200H5.200Z" fill="#acacac"/>
</svg>
<!-- 23 minus -->
<svg style="left:963px;top:38px" width="16" height="6" viewBox="0 0 16 6">
 <rect x=".6" y=".4" width="14.600" height="5.400" rx=".8" fill="#acacac"/>
</svg>
<!-- 24 circle x -->
<svg style="left:988px;top:32px" width="18" height="18" viewBox="0 0 18 18">
 <circle cx="9" cy="9" r="7" fill="#f6f6f6" stroke="#a2a2a2" stroke-width="2"/>
 <circle cx="9" cy="9" r="5.400" fill="none" stroke="#d6d6d6" stroke-width=".8"/>
 <path d="M6.400 6.400L11.600 11.600M11.600 6.400L6.400 11.600" stroke="#9a9a9a" stroke-width="2.200"/>
</svg>
<!-- right buttons icons -->
<svg style="left:1232px;top:34px" width="14" height="14" viewBox="0 0 14 14">
 <rect x=".5" y=".5" width="13" height="13" fill="#d3d7ee" stroke="#9a9aa6" stroke-width="1"/>
 <path d="M7 .5V13.500" stroke="#9a9aa6" stroke-width="1"/>
</svg>
<svg style="left:1259px;top:34px" width="14" height="14" viewBox="0 0 14 14">
 <rect x=".5" y=".5" width="13" height="13" fill="#d3d7ee" stroke="#9a9aa6" stroke-width="1"/>
 <path d="M.5 7H13.500" stroke="#9a9aa6" stroke-width="1"/>
</svg>
<svg style="left:1284px;top:32px" width="18" height="18" viewBox="0 0 18 18">
 <rect x="1" y="1" width="16" height="16" fill="#fdfdfd" stroke="#2b2b2b" stroke-width="2"/>
 <rect x="0" y="0" width="18" height="5" fill="#2b2b2b"/>
</svg>
<svg style="left:1315px;top:36px" width="11" height="11" viewBox="0 0 11 11">
 <rect x=".5" y=".5" width="10" height="10" rx="2" fill="#f8f8f8" stroke="#7a7a7a"/>
 <path d="M3 3l5 5M8 3l-5 5" stroke="#2a2a2a" stroke-width="1.800"/>
</svg>


<!-- render view -->
<div class="a" style="left:362px;top:55px;width:971px;height:652px;background:#0000f4"></div>
<div class="a" style="left:364px;top:57px;width:967px;height:648px;background:#d8d8e0"></div>
<div class="a" style="left:365px;top:58px;width:965px;height:646px;background:#52576e"></div>
<div class="a hm" style="left:571px;top:105px;width:553px;height:552px">
<div style="top:0px;height:4px;background:linear-gradient(90deg,#94b6ff 0%,#dcdddd 1.2%,#f6bfa6 2%,#f59c7d 2.7%,#eb7d62 3.5%,#df634e 4.3%,#d55042 5.1%,#cc403a 5.9%,#c0282f 7.4%,#ba162b 9%,#b50927 11.3%,#b50927 12.1%,#b40426 12.9%,#b40426 87.1%,#b50927 87.9%,#b50927 88.7%,#ba162b 91%,#c0282f 92.6%,#cc403a 94.1%,#d55042 94.9%,#df634e 95.7%,#eb7d62 96.5%,#f59c7d 97.3%,#f6bfa6 98%,#dcdddd 98.8%,#9ebeff 100%)"></div>
<div style="top:4px;height:5px;background:linear-gradient(90deg,#89acfd 0%,#8fb1fe 1.2%,#a7c5fe 2%,#c5d6f2 2.7%,#dcdddd 3.5%,#edd2c3 4.3%,#f5c2aa 5.1%,#f7b396 5.9%,#f39778 7.4%,#ec8165 9%,#e9785d 9.8%,#e26952 11.3%,#dd5f4b 12.9%,#d65244 15.2%,#cc403a 21.5%,#cb3e38 23.8%,#ca3b37 24.6%,#ca3b37 25.4%,#c83836 26.2%,#c83836 27.7%,#c73635 29.3%,#c73635 30.1%,#c53334 30.9%,#c53334 33.2%,#c43032 34%,#c43032 37.1%,#c32e31 38.7%,#c32e31 44.9%,#c12b30 45.7%,#c12b30 58.2%,#c32e31 59%,#c32e31 65.2%,#c43032 66.8%,#c43032 69.1%,#c53334 69.9%,#c53334 72.3%,#c73635 73%,#c73635 74.6%,#c83836 76.2%,#ca3b37 77%,#ca3b37 77.7%,#cb3e38 78.5%,#cd423b 81.6%,#d44e41 85.5%,#d95847 87.9%,#dd5f4b 88.7%,#e26952 90.2%,#e57058 91%,#ee8468 92.6%,#f29072 93.4%,#f59f80 94.1%,#f7b093 94.9%,#f5c2aa 95.7%,#ead4c8 96.5%,#d4dbe6 97.3%,#b6cefa 98%,#98b9ff 98.8%,#93b5fe 100%)"></div>
<div style="top:9px;height:4px;background:linear-gradient(90deg,#81a4fb 0%,#7a9df8 1.2%,#82a6fb 2%,#94b6ff 2.7%,#aac7fd 3.5%,#bfd3f6 4.3%,#d1dae9 5.1%,#dfdbd9 5.9%,#ead4c8 6.6%,#f1ccb8 7.4%,#f7b89c 9%,#f7a889 10.5%,#f59f80 11.3%,#f08b6e 13.7%,#eb7d62 16%,#e46e56 19.1%,#dc5d4a 25.4%,#d95847 27%,#d85646 28.5%,#d65244 31.6%,#d44e41 34%,#d44e41 34.8%,#d24b40 35.5%,#d24b40 37.1%,#d1493f 38.7%,#d1493f 40.2%,#d0473d 41.8%,#d0473d 44.1%,#cf453c 45.7%,#cf453c 59%,#d0473d 60.5%,#d0473d 62.9%,#d1493f 64.5%,#d1493f 66%,#d24b40 67.6%,#d24b40 68.4%,#d44e41 69.1%,#d55042 71.5%,#d85646 74.6%,#d95847 76.2%,#df634e 80.1%,#e36c55 82.4%,#e67259 84%,#ec7f63 86.3%,#f29274 88.7%,#f7aa8c 91%,#f7b497 91.8%,#f6bfa6 92.6%,#f2cab5 93.4%,#ead5c9 94.1%,#dcdddd 94.9%,#cbd8ee 95.7%,#b5cdfa 96.5%,#9dbdff 97.3%,#86a9fc 98%,#7ea1fa 98.8%,#8db0fe 100%)"></div>
<div style="top:13px;height:4px;background:linear-gradient(90deg,#7da0f9 0%,#7396f5 1.2%,#7396f5 2%,#7b9ff9 2.7%,#89acfd 3.5%,#9abbff 4.3%,#aac7fd 5.1%,#bbd1f8 5.9%,#c9d7f0 6.6%,#d5dbe5 7.4%,#dfdbd9 8.2%,#e8d6cc 9%,#edd1c2 9.8%,#f2cab5 10.5%,#f6bda2 12.1%,#f7a688 15.2%,#f39475 18.4%,#ed8366 22.3%,#ea7b60 24.6%,#e8765c 26.2%,#e36c55 30.1%,#e26952 32.4%,#de614d 37.9%,#dd5f4b 41%,#dc5d4a 42.6%,#dc5d4a 44.1%,#da5a49 44.9%,#da5a49 49.6%,#d95847 51.2%,#d95847 54.3%,#da5a49 55.9%,#da5a49 59.8%,#dc5d4a 60.5%,#dc5d4a 62.9%,#e0654f 68.4%,#e26952 71.5%,#e8765c 77%,#e97a5f 77.7%,#ea7b60 78.5%,#f08b6e 82.4%,#f59f80 85.5%,#f7b093 87.9%,#f4c6af 90.2%,#ead5c9 91.8%,#e0dbd8 92.6%,#d4dbe6 93.4%,#c6d6f1 94.1%,#b5cdfa 94.9%,#a1c0ff 95.7%,#8db0fe 96.5%,#7da0f9 97.3%,#7597f6 98%,#779af7 98.8%,#88abfd 100%)"></div>
<div style="top:17px;height:5px;background:linear-gradient(90deg,#799cf8 0%,#7295f4 1.2%,#6e90f2 2%,#6f92f3 2.7%,#7699f6 3.5%,#8db0fe 5.1%,#9bbcff 5.9%,#aac7fd 6.6%,#c3d5f4 8.2%,#d6dce4 9.8%,#dedcdb 10.5%,#ead4c8 12.1%,#f2cbb7 13.7%,#f6bda2 16%,#f7af91 18.4%,#f5a081 21.5%,#f39475 24.6%,#f18d6f 27%,#ef886b 28.5%,#e97a5f 34.8%,#e9785d 36.3%,#e7745b 39.5%,#e57058 41.8%,#e57058 43.4%,#e46e56 44.9%,#e46e56 46.5%,#e36c55 48%,#e36c55 57.4%,#e46e56 59%,#e46e56 60.5%,#e57058 62.1%,#e67259 64.5%,#e9785d 67.6%,#e97a5f 69.1%,#ee8669 74.6%,#f08a6c 75.4%,#f08b6e 76.2%,#f29274 77.7%,#f39778 79.3%,#f59f80 80.9%,#f7aa8c 83.2%,#f7b093 84%,#f7b497 84.8%,#f4c5ad 87.1%,#f2cab5 87.9%,#e9d5cb 89.5%,#e2dad5 90.2%,#d9dce1 91%,#cfdaea 91.8%,#c3d5f4 92.6%,#a5c3fe 94.1%,#94b6ff 94.9%,#779af7 96.5%,#6f92f3 97.3%,#6e90f2 98%,#7597f6 98.8%,#84a7fc 100%)"></div>
<div style="top:22px;height:4px;background:linear-gradient(90deg,#7699f6 0%,#6b8df0 2%,#6a8bef 2.7%,#6c8ff1 3.5%,#7295f4 4.3%,#85a8fc 5.9%,#92b4fe 6.6%,#9dbdff 7.4%,#b3cdfb 9%,#c7d7f0 10.5%,#d6dce4 12.1%,#e2dad5 13.7%,#efcfbf 16%,#f4c5ad 18.4%,#f7b599 21.5%,#f7b093 23%,#f7a98b 24.6%,#f49a7b 29.3%,#f18d6f 34.8%,#f08a6c 37.1%,#ee8468 40.2%,#ed8366 42.6%,#ec8165 44.1%,#ec7f63 47.3%,#eb7d62 50.4%,#eb7d62 55.9%,#ec7f63 57.4%,#ec7f63 59%,#ec8165 60.5%,#ed8366 62.9%,#ee8669 65.2%,#f29072 70.7%,#f4987a 73.8%,#f59c7d 74.6%,#f5a081 76.2%,#f7ac8e 79.3%,#f7bca1 82.4%,#f1cdba 85.5%,#e9d5cb 87.1%,#dcdddd 88.7%,#ccd9ed 90.2%,#b6cefa 91.8%,#9bbcff 93.4%,#8caffe 94.1%,#7597f6 95.7%,#6c8ff1 96.5%,#688aef 97.3%,#6b8df0 98%,#7396f5 98.8%,#81a4fb 100%)"></div>
<div style="top:26px;height:4px;background:linear-gradient(90deg,#7597f6 0%,#6b8df0 2%,#6788ee 3.5%,#6a8bef 4.3%,#6f92f3 5.1%,#89acfd 7.4%,#9ebeff 9%,#b1cbfc 10.5%,#c3d5f4 12.1%,#d1dae9 13.7%,#dbdcde 15.2%,#e5d8d1 16.8%,#f1cdba 19.9%,#f5c4ac 22.3%,#f7b599 26.2%,#f7a889 30.9%,#f59d7e 35.5%,#f4987a 37.9%,#f29072 44.9%,#f18f71 48.8%,#f18d6f 50.4%,#f18d6f 55.1%,#f18f71 56.6%,#f29072 60.5%,#f39475 62.9%,#f39577 64.5%,#f49a7b 67.6%,#f7a889 73%,#f7b497 77%,#f5c1a9 80.1%,#f1ccb8 82.4%,#e8d6cc 84.8%,#dedcdb 86.3%,#d1dae9 87.9%,#c0d4f5 89.5%,#abc8fd 91%,#9fbfff 91.8%,#7b9ff9 94.1%,#6b8df0 95.7%,#6788ee 96.5%,#6788ee 97.3%,#6b8df0 98%,#7396f5 98.8%,#7ea1fa 100%)"></div>
<div style="top:30px;height:5px;background:linear-gradient(90deg,#7396f5 0%,#7093f3 1.2%,#6788ee 2.7%,#6687ed 4.3%,#6c8ff1 5.9%,#7b9ff9 7.4%,#96b7ff 9.8%,#afcafc 12.1%,#c5d6f2 14.5%,#d6dce4 16.8%,#dedcdb 18.4%,#e6d7cf 19.9%,#f2c9b4 24.6%,#f6bfa6 27.7%,#f7b194 33.2%,#f7af91 34.8%,#f7a98b 37.1%,#f6a283 41.8%,#f59f80 46.5%,#f59d7e 48%,#f59d7e 56.6%,#f59d7e 58.2%,#f59f80 59.8%,#f7a889 66.8%,#f7aa8c 68.4%,#f7ad90 69.1%,#f7b497 72.3%,#f6bea4 75.4%,#f5c2aa 77%,#edd1c2 80.9%,#dfdbd9 84%,#d4dbe6 85.5%,#c7d7f0 87.1%,#b6cefa 88.7%,#a3c2fe 90.2%,#8db0fe 91.8%,#799cf8 93.4%,#7093f3 94.1%,#6a8bef 94.9%,#6485ec 96.5%,#6687ed 97.3%,#6b8df0 98%,#7b9ff9 100%)"></div>
<div style="top:35px;height:4px;background:linear-gradient(90deg,#7396f5 0%,#688aef 2.7%,#6485ec 3.5%,#6485ec 5.1%,#6b8df0 6.6%,#779af7 8.2%,#8fb1fe 10.5%,#a6c4fe 12.9%,#bbd1f8 15.2%,#ccd9ed 17.6%,#dcdddd 20.7%,#ebd3c6 24.6%,#f1ccb8 27.7%,#f5c1a9 31.6%,#f7bca1 34.8%,#f7b89c 36.3%,#f7b093 41%,#f7ac8e 45.7%,#f7aa8c 47.3%,#f7a98b 55.9%,#f7aa8c 58.2%,#f7ac8e 59.8%,#f7b194 64.5%,#f7b99e 69.1%,#f6bda2 70.7%,#f5c1a9 72.3%,#f4c5ad 73.8%,#f2cab5 75.4%,#ecd3c5 78.5%,#dfdbd9 81.6%,#d6dce4 83.2%,#c5d6f2 85.5%,#b6cefa 87.1%,#a6c4fe 88.7%,#93b5fe 90.2%,#80a3fa 91.8%,#688aef 94.1%,#6485ec 94.9%,#6384eb 96.5%,#6788ee 97.3%,#7396f5 98.8%,#7a9df8 100%)"></div>
<div style="top:39px;height:4px;background:linear-gradient(90deg,#7396f5 0%,#688aef 2.7%,#6282ea 5.1%,#6687ed 6.6%,#6a8bef 7.4%,#7a9df8 9.8%,#90b2fe 12.1%,#a5c3fe 14.5%,#b7cff9 16.8%,#c3d5f4 18.4%,#d1dae9 20.7%,#d7dce3 22.3%,#dedcdb 23.8%,#e8d6cc 27%,#f0cdbb 30.9%,#f2cbb7 32.4%,#f4c5ad 35.5%,#f6bda2 40.2%,#f7b89c 44.9%,#f7b79b 47.3%,#f7b599 48.8%,#f7b599 52%,#f7b497 52.7%,#f7b599 54.3%,#f7b599 57.4%,#f7b89c 59.8%,#f7ba9f 62.9%,#f5c1a9 67.6%,#f4c5ad 69.1%,#f0cdbb 73%,#ead5c9 76.2%,#dedcdb 79.3%,#d7dce3 80.9%,#cedaeb 82.4%,#c4d5f3 84%,#afcafc 86.3%,#97b8ff 88.7%,#7da0f9 91%,#688aef 93.4%,#6282ea 94.9%,#6282ea 95.7%,#6788ee 97.3%,#799cf8 100%)"></div>
<div style="top:43px;height:4px;background:linear-gradient(90deg,#7295f4 0%,#6e90f2 2%,#6384eb 4.3%,#6282ea 5.9%,#6485ec 7.4%,#6c8ff1 9%,#84a7fc 12.1%,#92b4fe 13.7%,#9ebeff 15.2%,#aac7fd 16.8%,#c4d5f3 20.7%,#d3dbe7 23.8%,#e0dbd8 27.7%,#e3d9d3 28.5%,#ead4c8 31.6%,#eed0c0 34%,#efcfbf 34.8%,#f0cdbb 35.5%,#f2cbb7 37.9%,#f4c6af 41%,#f5c4ac 43.4%,#f5c1a9 45.7%,#f6bfa6 50.4%,#f5c0a7 58.2%,#f5c2aa 60.5%,#f4c5ad 62.9%,#f2cbb7 67.6%,#f0cdbb 69.1%,#efcfbf 69.9%,#edd2c3 71.5%,#e8d6cc 73.8%,#e5d8d1 74.6%,#e3d9d3 75.4%,#dadce0 77.7%,#d4dbe6 79.3%,#c1d4f4 82.4%,#b6cefa 84%,#a9c6fd 85.5%,#9abbff 87.1%,#7b9ff9 90.2%,#688aef 92.6%,#6282ea 94.1%,#6180e9 94.9%,#6485ec 96.5%,#779af7 100%)"></div>
<div style="top:47px;height:5px;background:linear-gradient(90deg,#7295f4 0%,#6e90f2 2%,#6384eb 4.3%,#6180e9 5.9%,#6282ea 7.4%,#6788ee 9%,#7a9df8 12.1%,#8caffe 14.5%,#a3c2fe 17.6%,#b7cff9 20.7%,#c7d7f0 23.8%,#d2dbe8 26.2%,#dfdbd9 30.9%,#ead5c9 35.5%,#ebd3c6 37.1%,#edd1c2 38.7%,#f1ccb8 43.4%,#f2cbb7 45.7%,#f2c9b4 48%,#f2c9b4 49.6%,#f3c8b2 51.2%,#f3c8b2 55.1%,#f2c9b4 56.6%,#f2cab5 59%,#f0cdbb 63.7%,#e8d6cc 69.9%,#e3d9d3 72.3%,#dedcdb 73.8%,#d9dce1 75.4%,#d4dbe6 77%,#ccd9ed 78.5%,#c4d5f3 80.1%,#afcafc 83.2%,#9dbdff 85.5%,#8fb1fe 87.1%,#86a9fc 87.9%,#6e90f2 91%,#6485ec 92.6%,#6180e9 94.1%,#6282ea 95.7%,#7699f6 100%)"></div>
<div style="top:52px;height:4px;background:linear-gradient(90deg,#7295f4 0%,#6b8df0 2.7%,#6485ec 4.3%,#5f7fe8 6.6%,#6384eb 9%,#6e90f2 11.3%,#82a6fb 14.5%,#98b9ff 17.6%,#abc8fd 20.7%,#b5cdfa 22.3%,#c7d7f0 26.2%,#d4dbe6 30.1%,#dcdddd 33.2%,#e3d9d3 36.3%,#e6d7cf 38.7%,#e9d5cb 40.2%,#ebd3c6 42.6%,#edd1c2 47.3%,#eed0c0 48.8%,#eed0c0 55.9%,#eed0c0 57.4%,#edd2c3 59.8%,#ecd3c5 61.3%,#e6d7cf 66.8%,#dcdddd 71.5%,#d3dbe7 74.6%,#c5d6f2 77.7%,#b9d0f9 80.1%,#9ebeff 84%,#92b4fe 85.5%,#7ea1fa 87.9%,#7295f4 89.5%,#688aef 91%,#6282ea 92.6%,#5f7fe8 94.1%,#6180e9 94.9%,#6a8bef 97.3%,#7699f6 100%)"></div>
<div style="top:56px;height:4px;background:linear-gradient(90deg,#7295f4 0%,#688aef 3.5%,#6282ea 5.1%,#5f7fe8 7.4%,#6180e9 9%,#688aef 11.3%,#7093f3 12.9%,#89acfd 16.8%,#a1c0ff 20.7%,#b2ccfb 23.8%,#c3d5f4 27.7%,#cdd9ec 30.9%,#d9dce1 35.5%,#dedcdb 38.7%,#e1dad6 40.2%,#e8d6cc 47.3%,#e9d5cb 55.9%,#e8d6cc 58.2%,#e1dad6 64.5%,#dcdddd 67.6%,#ccd9ed 73.8%,#bfd3f6 77%,#aec9fc 80.1%,#98b9ff 83.2%,#88abfd 85.5%,#7093f3 88.7%,#6485ec 91%,#5f7fe8 92.6%,#5f7fe8 94.1%,#6180e9 94.9%,#6788ee 96.5%,#6f92f3 98%,#7597f6 100%)"></div>
<div style="top:60px;height:5px;background:linear-gradient(90deg,#7295f4 0%,#6c8ff1 2.7%,#6687ed 4.3%,#6180e9 5.9%,#5e7de7 8.2%,#6180e9 9.8%,#6384eb 10.5%,#6485ec 11.3%,#7b9ff9 16%,#85a8fc 17.6%,#97b8ff 20.7%,#afcafc 25.4%,#bfd3f6 29.3%,#cdd9ec 34%,#d4dbe6 37.1%,#dcdddd 42.6%,#e0dbd8 47.3%,#e1dad6 50.4%,#e1dad6 55.1%,#e1dad6 56.6%,#dfdbd9 59%,#dcdddd 62.9%,#d1dae9 69.1%,#c3d5f4 73.8%,#adc9fd 78.5%,#9ebeff 80.9%,#94b6ff 82.4%,#80a3fa 85.5%,#6f92f3 87.9%,#6788ee 89.5%,#5f7fe8 91.8%,#5f7fe8 94.1%,#6485ec 95.7%,#7295f4 98.8%,#7597f6 100%)"></div>
<div style="top:65px;height:4px;background:linear-gradient(90deg,#7295f4 0%,#6c8ff1 2.7%,#6384eb 5.1%,#5e7de7 7.4%,#5e7de7 9%,#6485ec 12.1%,#6a8bef 13.7%,#7699f6 16%,#7da0f9 17.6%,#82a6fb 18.4%,#93b5fe 21.5%,#a5c3fe 25.4%,#adc9fd 27%,#bed2f6 31.6%,#cad8ef 36.3%,#d4dbe6 41.8%,#d9dce1 48%,#d9dce1 56.6%,#d7dce3 60.5%,#cfdaea 66%,#c9d7f0 69.1%,#bfd3f6 72.3%,#b2ccfb 75.4%,#a7c5fe 77.7%,#96b7ff 80.9%,#8caffe 82.4%,#7396f5 86.3%,#6788ee 88.7%,#5f7fe8 91%,#5e7de7 92.6%,#6282ea 94.9%,#6f92f3 98%,#7396f5 100%)"></div>
<div style="top:69px;height:4px;background:linear-gradient(90deg,#7295f4 0%,#6c8ff1 2.7%,#6282ea 5.9%,#5e7de7 8.2%,#5e7de7 9.8%,#6687ed 13.7%,#7396f5 16.8%,#8badfd 21.5%,#8db0fe 22.3%,#96b7ff 23.8%,#98b9ff 24.6%,#9dbdff 25.4%,#a9c6fd 28.5%,#b2ccfb 30.9%,#bed2f6 34.8%,#c7d7f0 39.5%,#d2dbe8 48%,#d2dbe8 58.2%,#cdd9ec 62.1%,#c9d7f0 65.2%,#c5d6f2 66.8%,#b9d0f9 71.5%,#a9c6fd 75.4%,#9abbff 78.5%,#92b4fe 80.1%,#88abfd 81.6%,#7699f6 84.8%,#6a8bef 87.1%,#6180e9 89.5%,#5e7de7 91.8%,#6180e9 94.1%,#7295f4 98.8%,#7396f5 100%)"></div>
<div style="top:73px;height:5px;background:linear-gradient(90deg,#7295f4 0%,#6e90f2 2.7%,#6180e9 6.6%,#5d7ce6 9.8%,#5f7fe8 12.1%,#6e90f2 16.8%,#7295f4 17.6%,#7597f6 18.4%,#7b9ff9 19.9%,#80a3fa 20.7%,#89acfd 23%,#9ebeff 27.7%,#b1cbfc 33.2%,#bed2f6 38.7%,#c5d6f2 42.6%,#cad8ef 47.3%,#cad8ef 56.6%,#c9d7f0 59%,#c7d7f0 60.5%,#bfd3f6 66%,#b2ccfb 70.7%,#a3c2fe 74.6%,#9dbdff 76.2%,#94b6ff 77.7%,#92b4fe 78.5%,#799cf8 83.2%,#688aef 86.3%,#6180e9 88.7%,#5d7ce6 91.8%,#5f7fe8 93.4%,#7295f4 98.8%,#7396f5 100%)"></div>
<div style="top:78px;height:4px;background:linear-gradient(90deg,#7295f4 0%,#6e90f2 2.7%,#6384eb 5.9%,#5e7de7 8.2%,#5e7de7 12.1%,#6180e9 13.7%,#6384eb 14.5%,#6788ee 16%,#799cf8 20.7%,#90b2fe 26.2%,#a6c4fe 32.4%,#aac7fd 34%,#b2ccfb 37.1%,#bbd1f8 41.8%,#c1d4f4 46.5%,#c3d5f4 49.6%,#c3d5f4 56.6%,#c1d4f4 58.2%,#bbd1f8 62.9%,#b6cefa 66%,#a9c6fd 70.7%,#9bbcff 74.6%,#89acfd 78.5%,#7a9df8 81.6%,#688aef 85.5%,#6180e9 87.9%,#5d7ce6 91%,#5f7fe8 93.4%,#6a8bef 96.5%,#6e90f2 97.3%,#7396f5 100%)"></div>
<div style="top:82px;height:4px;background:linear-gradient(90deg,#7295f4 0%,#7093f3 2%,#6788ee 5.1%,#6180e9 7.4%,#5d7ce6 10.5%,#5e7de7 12.9%,#6687ed 16.8%,#7699f6 21.5%,#8fb1fe 27.7%,#9ebeff 32.4%,#aac7fd 37.1%,#b6cefa 43.4%,#bbd1f8 48.8%,#bad0f8 58.2%,#b1cbfc 64.5%,#a6c4fe 69.1%,#93b5fe 74.6%,#85a8fc 77.7%,#82a6fb 78.5%,#7ea1fa 79.3%,#7b9ff9 80.1%,#6c8ff1 83.2%,#6282ea 86.3%,#5d7ce6 88.7%,#5e7de7 92.6%,#6e90f2 97.3%,#7396f5 100%)"></div>
<div style="top:86px;height:5px;background:linear-gradient(90deg,#7295f4 0%,#7093f3 2%,#6c8ff1 3.5%,#6485ec 5.9%,#6384eb 6.6%,#6180e9 7.4%,#5d7ce6 10.5%,#5e7de7 14.5%,#6282ea 16%,#6a8bef 19.1%,#7a9df8 23.8%,#8badfd 28.5%,#8fb1fe 30.1%,#9fbfff 35.5%,#a3c2fe 37.9%,#a9c6fd 40.2%,#aec9fc 43.4%,#b2ccfb 48%,#b2ccfb 57.4%,#a9c6fd 64.5%,#9bbcff 69.9%,#85a8fc 76.2%,#82a6fb 77%,#7ea1fa 77.7%,#799cf8 79.3%,#7597f6 80.1%,#6f92f3 81.6%,#688aef 83.2%,#5e7de7 87.1%,#5b7ae5 89.5%,#5e7de7 91.8%,#6180e9 93.4%,#7093f3 98%,#7295f4 100%)"></div>
<div style="top:91px;height:4px;background:linear-gradient(90deg,#7295f4 0%,#6f92f3 2.7%,#6a8bef 4.3%,#6687ed 5.9%,#5e7de7 9%,#5b7ae5 12.1%,#5e7de7 15.2%,#6180e9 16.8%,#6384eb 17.6%,#688aef 19.9%,#7295f4 23%,#7a9df8 25.4%,#7ea1fa 27%,#88abfd 30.1%,#92b4fe 33.2%,#98b9ff 36.3%,#9dbdff 37.9%,#a7c5fe 44.1%,#abc8fd 50.4%,#aac7fd 57.4%,#a2c1ff 63.7%,#9ebeff 66%,#93b5fe 69.9%,#8fb1fe 71.5%,#799cf8 77.7%,#6485ec 83.2%,#5d7ce6 86.3%,#5b7ae5 89.5%,#5e7de7 91.8%,#688aef 95.7%,#7295f4 98.8%,#7295f4 100%)"></div>
<div style="top:95px;height:4px;background:linear-gradient(90deg,#7295f4 0%,#6f92f3 2.7%,#6282ea 7.4%,#5b7ae5 11.3%,#5b7ae5 14.5%,#6384eb 19.1%,#7295f4 24.6%,#82a6fb 30.1%,#90b2fe 35.5%,#97b8ff 38.7%,#9ebeff 42.6%,#a3c2fe 48%,#a3c2fe 50.4%,#a5c3fe 52%,#a5c3fe 53.5%,#a3c2fe 55.1%,#a1c0ff 59.8%,#93b5fe 67.6%,#89acfd 70.7%,#85a8fc 72.3%,#7da0f9 74.6%,#799cf8 76.2%,#6384eb 82.4%,#5b7ae5 86.3%,#5a78e4 87.9%,#5a78e4 89.5%,#5f7fe8 92.6%,#6c8ff1 96.5%,#7295f4 98.8%,#7295f4 100%)"></div>
<div style="top:99px;height:4px;background:linear-gradient(90deg,#7295f4 0%,#6f92f3 2.7%,#6788ee 5.9%,#6384eb 7.4%,#6180e9 8.2%,#5b7ae5 11.3%,#5b7ae5 15.2%,#6282ea 19.9%,#6f92f3 25.4%,#7597f6 27%,#88abfd 34.8%,#8fb1fe 37.9%,#96b7ff 41.8%,#98b9ff 44.9%,#9bbcff 47.3%,#9dbdff 50.4%,#9dbdff 55.9%,#9abbff 58.2%,#92b4fe 64.5%,#8db0fe 66.8%,#89acfd 68.4%,#81a4fb 71.5%,#779af7 74.6%,#688aef 79.3%,#6180e9 82.4%,#5b7ae5 84.8%,#5977e3 87.9%,#5b7ae5 90.2%,#6180e9 92.6%,#6384eb 93.4%,#6788ee 94.9%,#6f92f3 97.3%,#7295f4 100%)"></div>
<div style="top:103px;height:5px;background:linear-gradient(90deg,#7295f4 0%,#6f92f3 2.7%,#6788ee 5.9%,#6282ea 8.2%,#5e7de7 9.8%,#5a78e4 14.5%,#5b7ae5 16%,#5e7de7 18.4%,#6687ed 23%,#7295f4 27.7%,#7597f6 29.3%,#7b9ff9 31.6%,#80a3fa 34%,#84a7fc 35.5%,#8fb1fe 41.8%,#94b6ff 47.3%,#94b6ff 48.8%,#96b7ff 50.4%,#96b7ff 55.1%,#94b6ff 56.6%,#92b4fe 59.8%,#88abfd 66%,#799cf8 72.3%,#6f92f3 75.4%,#6b8df0 77%,#6485ec 79.3%,#6384eb 80.1%,#6180e9 80.9%,#5977e3 85.5%,#5a78e4 89.5%,#6180e9 92.6%,#688aef 94.9%,#6a8bef 95.7%,#6f92f3 97.3%,#7295f4 100%)"></div>
<div style="top:108px;height:4px;background:linear-gradient(90deg,#7295f4 0%,#6f92f3 2.7%,#6c8ff1 4.3%,#6a8bef 5.1%,#6485ec 7.4%,#5e7de7 10.5%,#5a78e4 13.7%,#5a78e4 16.8%,#5d7ce6 18.4%,#6180e9 21.5%,#6687ed 24.6%,#6c8ff1 27.7%,#7699f6 31.6%,#7a9df8 34%,#80a3fa 36.3%,#89acfd 43.4%,#8db0fe 46.5%,#8db0fe 48%,#8fb1fe 49.6%,#8fb1fe 55.1%,#8db0fe 56.6%,#8caffe 59%,#80a3fa 66.8%,#7396f5 72.3%,#6485ec 77.7%,#6384eb 78.5%,#6180e9 79.3%,#5977e3 84%,#5875e1 87.1%,#5b7ae5 90.2%,#688aef 94.9%,#6f92f3 97.3%,#7295f4 100%)"></div>
<div style="top:112px;height:4px;background:linear-gradient(90deg,#7295f4 0%,#6f92f3 2.7%,#6b8df0 5.1%,#6485ec 7.4%,#6384eb 8.2%,#6180e9 9%,#5b7ae5 12.1%,#5a78e4 15.2%,#5a78e4 18.4%,#5d7ce6 19.9%,#6180e9 23%,#6788ee 27%,#6b8df0 28.5%,#7295f4 32.4%,#7699f6 34%,#7da0f9 37.9%,#81a4fb 41%,#84a7fc 43.4%,#86a9fc 47.3%,#88abfd 48.8%,#88abfd 55.9%,#85a8fc 58.2%,#84a7fc 60.5%,#7da0f9 65.2%,#799cf8 67.6%,#7396f5 69.9%,#6c8ff1 73%,#6a8bef 73.8%,#6384eb 77%,#5b7ae5 80.9%,#5875e1 84%,#5875e1 87.1%,#5b7ae5 90.2%,#6b8df0 95.7%,#6f92f3 97.3%,#7295f4 100%)"></div>
<div style="top:116px;height:5px;background:linear-gradient(90deg,#7295f4 0%,#6f92f3 2.7%,#6b8df0 5.1%,#6788ee 6.6%,#6180e9 9.8%,#5b7ae5 12.1%,#5977e3 16.8%,#5a78e4 19.9%,#5d7ce6 21.5%,#6180e9 24.6%,#7396f5 35.5%,#799cf8 38.7%,#7b9ff9 41.8%,#81a4fb 46.5%,#81a4fb 48.8%,#82a6fb 50.4%,#82a6fb 54.3%,#81a4fb 55.9%,#80a3fa 58.2%,#7da0f9 60.5%,#779af7 65.2%,#7396f5 67.6%,#6f92f3 69.1%,#6a8bef 72.3%,#6485ec 74.6%,#6384eb 75.4%,#6180e9 76.2%,#5875e1 81.6%,#5673e0 84.8%,#5673e0 86.3%,#5a78e4 89.5%,#5d7ce6 90.2%,#6282ea 92.6%,#6a8bef 94.9%,#7295f4 98.8%,#7295f4 100%)"></div>
<div style="top:121px;height:4px;background:linear-gradient(90deg,#7295f4 0%,#6f92f3 2.7%,#6a8bef 5.9%,#6282ea 9%,#5a78e4 13.7%,#5977e3 19.9%,#5b7ae5 22.3%,#6282ea 27%,#6485ec 29.3%,#6f92f3 35.5%,#7093f3 37.1%,#7597f6 39.5%,#779af7 42.6%,#7a9df8 44.9%,#7a9df8 46.5%,#7b9ff9 48%,#7b9ff9 55.9%,#7a9df8 57.4%,#799cf8 59.8%,#6f92f3 66.8%,#688aef 70.7%,#6282ea 73.8%,#5875e1 80.1%,#5572df 84%,#5673e0 86.3%,#5977e3 88.7%,#6180e9 91.8%,#6384eb 92.6%,#6788ee 94.1%,#6f92f3 97.3%,#7295f4 100%)"></div>
<div style="top:125px;height:4px;background:linear-gradient(90deg,#7295f4 0%,#6e90f2 4.3%,#6485ec 8.2%,#6384eb 9%,#6180e9 9.8%,#5a78e4 13.7%,#5977e3 16.8%,#5875e1 18.4%,#5a78e4 23%,#6180e9 28.5%,#6485ec 30.9%,#6788ee 33.2%,#6b8df0 36.3%,#7093f3 40.2%,#7396f5 44.1%,#7597f6 45.7%,#7699f6 48.8%,#7699f6 55.9%,#7597f6 57.4%,#7295f4 61.3%,#6e90f2 63.7%,#6b8df0 66%,#5977e3 77%,#5875e1 78.5%,#5673e0 80.1%,#5673e0 86.3%,#5875e1 87.9%,#5b7ae5 89.5%,#6180e9 91.8%,#6687ed 93.4%,#6a8bef 94.9%,#6c8ff1 95.7%,#7295f4 98.8%,#7295f4 100%)"></div>
<div style="top:129px;height:5px;background:linear-gradient(90deg,#7295f4 0%,#6c8ff1 5.1%,#6a8bef 5.9%,#6384eb 9%,#5b7ae5 12.9%,#5977e3 15.2%,#5875e1 18.4%,#5875e1 21.5%,#5977e3 23%,#5a78e4 25.4%,#5d7ce6 27%,#5f7fe8 30.1%,#6384eb 32.4%,#6485ec 34%,#6b8df0 39.5%,#6c8ff1 41.8%,#6f92f3 44.1%,#7093f3 49.6%,#7295f4 51.2%,#7295f4 52.7%,#7093f3 54.3%,#6f92f3 58.2%,#6c8ff1 60.5%,#6a8bef 63.7%,#6384eb 68.4%,#5e7de7 71.5%,#5b7ae5 73.8%,#5875e1 76.2%,#5470de 80.9%,#5470de 84.8%,#5d7ce6 90.2%,#688aef 94.1%,#6a8bef 94.9%,#6c8ff1 95.7%,#7295f4 98.8%,#7295f4 100%)"></div>
<div style="top:134px;height:4px;background:linear-gradient(90deg,#7295f4 0%,#6c8ff1 5.1%,#6687ed 8.2%,#6282ea 9.8%,#5977e3 15.2%,#5875e1 18.4%,#5673e0 19.9%,#5673e0 21.5%,#5875e1 23%,#5a78e4 27.7%,#5d7ce6 29.3%,#5f7fe8 32.4%,#6282ea 34.8%,#6788ee 39.5%,#688aef 41.8%,#6a8bef 43.4%,#6b8df0 46.5%,#6c8ff1 49.6%,#6c8ff1 54.3%,#6b8df0 55.9%,#6b8df0 57.4%,#688aef 59.8%,#6687ed 62.9%,#6485ec 64.5%,#5d7ce6 69.9%,#5b7ae5 71.5%,#5875e1 73.8%,#536edd 79.3%,#536edd 83.2%,#5b7ae5 89.5%,#688aef 94.1%,#6a8bef 94.9%,#6c8ff1 95.7%,#7295f4 98.8%,#7295f4 100%)"></div>
<div style="top:138px;height:4px;background:linear-gradient(90deg,#7295f4 0%,#6c8ff1 5.1%,#6a8bef 6.6%,#6282ea 9.8%,#5977e3 15.2%,#5875e1 17.6%,#5673e0 19.1%,#5673e0 24.6%,#5875e1 26.2%,#5a78e4 30.1%,#5f7fe8 35.5%,#6282ea 37.9%,#6485ec 42.6%,#6687ed 44.1%,#6687ed 56.6%,#6687ed 58.2%,#6485ec 59.8%,#6180e9 64.5%,#5b7ae5 68.4%,#5977e3 70.7%,#5572df 73.8%,#536edd 77.7%,#516ddb 79.3%,#516ddb 82.4%,#5470de 84.8%,#5a78e4 88.7%,#5d7ce6 89.5%,#6282ea 91.8%,#6b8df0 94.9%,#7295f4 98.8%,#7295f4 100%)"></div>
<div style="top:142px;height:5px;background:linear-gradient(90deg,#7295f4 0%,#6c8ff1 5.1%,#6687ed 8.2%,#6384eb 9.8%,#6180e9 10.5%,#5977e3 15.2%,#5875e1 17.6%,#5673e0 19.1%,#5673e0 26.2%,#5673e0 27.7%,#5977e3 30.1%,#5a78e4 33.2%,#5e7de7 37.1%,#5f7fe8 40.2%,#6180e9 41.8%,#6282ea 44.9%,#6384eb 46.5%,#6384eb 55.1%,#6282ea 56.6%,#6282ea 58.2%,#5f7fe8 60.5%,#5d7ce6 64.5%,#5977e3 67.6%,#5875e1 69.1%,#5673e0 70.7%,#5470de 73%,#516ddb 75.4%,#516ddb 77.7%,#506bda 79.3%,#506bda 80.9%,#516ddb 82.4%,#536edd 84%,#5a78e4 88.7%,#5d7ce6 89.5%,#6180e9 91%,#6384eb 91.8%,#688aef 94.1%,#6e90f2 96.5%,#7295f4 98.8%,#7295f4 100%)"></div>
<div style="top:147px;height:4px;background:linear-gradient(90deg,#7295f4 0%,#6c8ff1 5.1%,#6788ee 8.2%,#6384eb 9.8%,#6180e9 11.3%,#5b7ae5 13.7%,#5875e1 16.8%,#5673e0 18.4%,#5572df 21.5%,#5470de 23%,#5470de 25.4%,#5572df 27%,#5673e0 30.9%,#5875e1 32.4%,#5a78e4 37.1%,#5b7ae5 38.7%,#5e7de7 43.4%,#5e7de7 44.9%,#5f7fe8 46.5%,#5f7fe8 55.1%,#5e7de7 56.6%,#5d7ce6 59.8%,#5b7ae5 61.3%,#5977e3 64.5%,#5673e0 66.8%,#5572df 69.1%,#536edd 72.3%,#506bda 74.6%,#506bda 77%,#4f69d9 78.5%,#506bda 81.6%,#5470de 84.8%,#5977e3 87.9%,#5f7fe8 90.2%,#6180e9 91%,#6687ed 92.6%,#6c8ff1 95.7%,#7093f3 97.3%,#7295f4 100%)"></div>
<div style="top:151px;height:4px;background:linear-gradient(90deg,#7295f4 0%,#6c8ff1 5.1%,#6687ed 9%,#6282ea 10.5%,#5673e0 17.6%,#5572df 19.9%,#5470de 21.5%,#5470de 30.1%,#5572df 31.6%,#5673e0 34.8%,#5875e1 36.3%,#5977e3 39.5%,#5a78e4 43.4%,#5b7ae5 44.9%,#5b7ae5 55.9%,#5a78e4 57.4%,#5977e3 60.5%,#5673e0 62.9%,#5572df 66%,#536edd 69.1%,#506bda 71.5%,#506bda 73%,#4f69d9 74.6%,#4f69d9 80.9%,#5470de 84.8%,#5977e3 87.9%,#6687ed 92.6%,#6b8df0 94.9%,#6f92f3 96.5%,#7295f4 100%)"></div>
<div style="top:155px;height:5px;background:linear-gradient(90deg,#7295f4 0%,#6e90f2 5.1%,#6c8ff1 5.9%,#6a8bef 6.6%,#6485ec 9.8%,#5e7de7 12.9%,#5673e0 17.6%,#5572df 19.9%,#536edd 23%,#536edd 30.9%,#5470de 32.4%,#5470de 34.8%,#5572df 36.3%,#5673e0 41%,#5875e1 42.6%,#5875e1 45.7%,#5977e3 47.3%,#5977e3 52%,#5875e1 53.5%,#5875e1 56.6%,#5673e0 58.2%,#5572df 61.3%,#5470de 62.9%,#536edd 65.2%,#516ddb 66.8%,#4f69d9 70.7%,#4f69d9 81.6%,#5875e1 87.1%,#5e7de7 89.5%,#688aef 93.4%,#6f92f3 96.5%,#7295f4 100%)"></div>
<div style="top:160px;height:4px;background:linear-gradient(90deg,#7295f4 0%,#6f92f3 4.3%,#6b8df0 6.6%,#6788ee 8.2%,#6384eb 10.5%,#6180e9 11.3%,#5673e0 17.6%,#5470de 20.7%,#536edd 23.8%,#516ddb 25.4%,#516ddb 33.2%,#536edd 34.8%,#536edd 37.1%,#5470de 38.7%,#5470de 41.8%,#5572df 43.4%,#5572df 55.1%,#5470de 56.6%,#5470de 58.2%,#536edd 59.8%,#516ddb 62.9%,#506bda 64.5%,#4e68d8 69.1%,#4c66d6 72.3%,#4c66d6 78.5%,#4f69d9 80.9%,#506bda 82.4%,#5673e0 86.3%,#5977e3 87.1%,#5b7ae5 88.7%,#6180e9 90.2%,#688aef 93.4%,#6a8bef 94.1%,#6c8ff1 94.9%,#7295f4 100%)"></div>
<div style="top:164px;height:4px;background:linear-gradient(90deg,#7295f4 0%,#6f92f3 4.3%,#688aef 8.2%,#6282ea 11.3%,#5a78e4 15.2%,#5572df 19.1%,#536edd 22.3%,#516ddb 23.8%,#516ddb 25.4%,#506bda 27%,#506bda 35.5%,#516ddb 37.1%,#516ddb 41.8%,#536edd 43.4%,#536edd 52.7%,#516ddb 54.3%,#516ddb 57.4%,#506bda 59%,#506bda 60.5%,#4f69d9 62.1%,#4e68d8 65.2%,#4c66d6 66.8%,#4c66d6 68.4%,#4b64d5 69.9%,#4b64d5 77.7%,#506bda 82.4%,#5572df 85.5%,#5977e3 87.1%,#5a78e4 87.9%,#5d7ce6 88.7%,#6282ea 91%,#688aef 93.4%,#6a8bef 94.1%,#6c8ff1 94.9%,#7295f4 100%)"></div>
<div style="top:168px;height:5px;background:linear-gradient(90deg,#7295f4 0%,#6f92f3 4.3%,#6788ee 9%,#6384eb 10.5%,#5e7de7 13.7%,#5a78e4 15.2%,#5875e1 17.6%,#5470de 19.9%,#536edd 22.3%,#506bda 24.6%,#506bda 26.2%,#4f69d9 27.7%,#4f69d9 41%,#506bda 42.6%,#506bda 52%,#4f69d9 53.5%,#4e68d8 60.5%,#4c66d6 62.1%,#4b64d5 65.2%,#4b64d5 66.8%,#4a63d3 68.4%,#4a63d3 77%,#4c66d6 79.3%,#4e68d8 80.9%,#5572df 85.5%,#5f7fe8 89.5%,#6180e9 90.2%,#6384eb 91%,#688aef 93.4%,#6e90f2 95.7%,#7295f4 100%)"></div>
<div style="top:173px;height:4px;background:linear-gradient(90deg,#7295f4 0%,#6f92f3 4.3%,#6687ed 9.8%,#6282ea 11.3%,#5470de 19.9%,#506bda 24.6%,#4e68d8 29.3%,#4e68d8 51.2%,#4c66d6 52.7%,#4c66d6 56.6%,#4b64d5 58.2%,#4b64d5 60.5%,#4a63d3 62.1%,#4a63d3 64.5%,#4961d2 66%,#4961d2 75.4%,#4a63d3 77%,#4b64d5 78.5%,#506bda 82.4%,#5977e3 87.1%,#5f7fe8 89.5%,#6180e9 90.2%,#6687ed 91.8%,#688aef 93.4%,#6e90f2 95.7%,#7295f4 100%)"></div>
<div style="top:177px;height:4px;background:linear-gradient(90deg,#7295f4 0%,#7295f4 2%,#7093f3 3.5%,#6384eb 11.3%,#6180e9 12.1%,#5470de 19.9%,#4f69d9 25.4%,#4e68d8 28.5%,#4c66d6 30.1%,#4c66d6 34%,#4b64d5 35.5%,#4b64d5 52.7%,#4a63d3 54.3%,#4a63d3 57.4%,#4961d2 59%,#4961d2 62.1%,#485fd1 63.7%,#485fd1 68.4%,#465ecf 69.9%,#485fd1 71.5%,#485fd1 74.6%,#4a63d3 77.7%,#4c66d6 80.1%,#536edd 84%,#5572df 84.8%,#5875e1 86.3%,#5e7de7 88.7%,#6687ed 91.8%,#6f92f3 96.5%,#7295f4 100%)"></div>
<div style="top:181px;height:4px;background:linear-gradient(90deg,#7295f4 0%,#7295f4 2%,#7093f3 3.5%,#6282ea 12.1%,#5e7de7 13.7%,#5470de 19.9%,#516ddb 22.3%,#4e68d8 26.2%,#4e68d8 27.7%,#4c66d6 29.3%,#4b64d5 32.4%,#4b64d5 34%,#4a63d3 35.5%,#4a63d3 45.7%,#4961d2 47.3%,#4961d2 54.3%,#485fd1 55.9%,#485fd1 59.8%,#465ecf 61.3%,#465ecf 66%,#455cce 67.6%,#455cce 69.1%,#465ecf 70.7%,#465ecf 73%,#485fd1 74.6%,#4a63d3 77.7%,#4c66d6 80.1%,#516ddb 83.2%,#5572df 84.8%,#5673e0 85.5%,#5977e3 86.3%,#5b7ae5 87.9%,#6180e9 89.5%,#6788ee 92.6%,#6b8df0 94.1%,#7093f3 97.3%,#7295f4 100%)"></div>
<div style="top:185px;height:5px;background:linear-gradient(90deg,#7295f4 0%,#7295f4 2%,#7093f3 3.5%,#6b8df0 6.6%,#6b8df0 7.4%,#6788ee 9%,#5f7fe8 13.7%,#5977e3 16.8%,#5470de 19.9%,#516ddb 22.3%,#4e68d8 26.2%,#4b64d5 30.1%,#4a63d3 33.2%,#4a63d3 34.8%,#4961d2 36.3%,#4961d2 41%,#485fd1 42.6%,#485fd1 50.4%,#465ecf 52%,#465ecf 56.6%,#455cce 58.2%,#455cce 64.5%,#445acc 66%,#445acc 67.6%,#455cce 69.1%,#455cce 72.3%,#465ecf 73.8%,#485fd1 76.2%,#4b64d5 78.5%,#4c66d6 80.1%,#506bda 82.4%,#5470de 84%,#5673e0 85.5%,#5977e3 86.3%,#5a78e4 87.1%,#5d7ce6 87.9%,#6282ea 90.2%,#688aef 92.6%,#7093f3 97.3%,#7295f4 100%)"></div>
<div style="top:190px;height:4px;background:linear-gradient(90deg,#7295f4 0%,#7295f4 2%,#7093f3 3.5%,#6b8df0 7.4%,#6282ea 12.1%,#5d7ce6 15.2%,#5a78e4 16%,#5572df 19.1%,#5470de 20.7%,#506bda 23%,#4e68d8 26.2%,#4c66d6 27.7%,#4b64d5 29.3%,#4a63d3 30.9%,#4961d2 34%,#485fd1 37.1%,#485fd1 39.5%,#465ecf 41%,#465ecf 47.3%,#455cce 48.8%,#455cce 54.3%,#445acc 55.9%,#445acc 62.1%,#4358cb 63.7%,#4358cb 66.8%,#445acc 68.4%,#445acc 70.7%,#455cce 72.3%,#465ecf 74.6%,#4961d2 77%,#4c66d6 80.1%,#4f69d9 81.6%,#516ddb 82.4%,#5572df 84.8%,#5f7fe8 88.7%,#6180e9 89.5%,#6384eb 90.2%,#6f92f3 96.5%,#7295f4 100%)"></div>
<div style="top:194px;height:4px;background:linear-gradient(90deg,#7295f4 0%,#7295f4 2%,#7093f3 3.5%,#6b8df0 7.4%,#6687ed 10.5%,#6282ea 12.1%,#536edd 21.5%,#4e68d8 25.4%,#4c66d6 27%,#4b64d5 28.5%,#4a63d3 30.1%,#4961d2 33.2%,#485fd1 34.8%,#465ecf 37.9%,#465ecf 39.5%,#455cce 41%,#455cce 44.9%,#445acc 46.5%,#445acc 52%,#4358cb 53.5%,#4358cb 60.5%,#4257c9 62.1%,#4257c9 65.2%,#4358cb 66.8%,#4358cb 69.9%,#445acc 71.5%,#465ecf 75.4%,#4b64d5 78.5%,#4c66d6 80.1%,#5977e3 86.3%,#5f7fe8 88.7%,#6180e9 89.5%,#6384eb 90.2%,#6b8df0 94.1%,#6e90f2 94.9%,#7093f3 98%,#7295f4 100%)"></div>
<div style="top:198px;height:5px;background:linear-gradient(90deg,#7295f4 0%,#7295f4 2%,#7093f3 3.5%,#6b8df0 7.4%,#6485ec 11.3%,#5e7de7 14.5%,#4f69d9 23.8%,#4b64d5 28.5%,#4a63d3 30.1%,#485fd1 33.2%,#465ecf 36.3%,#455cce 37.9%,#455cce 40.2%,#445acc 41.8%,#445acc 44.9%,#4358cb 46.5%,#4358cb 50.4%,#4257c9 52%,#4257c9 59.8%,#4055c8 61.3%,#4055c8 62.9%,#4257c9 64.5%,#4257c9 68.4%,#4358cb 69.9%,#445acc 72.3%,#465ecf 74.6%,#485fd1 76.2%,#536edd 83.2%,#5572df 84%,#5875e1 85.5%,#5e7de7 87.9%,#6687ed 91%,#6a8bef 93.4%,#6c8ff1 94.1%,#7093f3 97.3%,#7295f4 100%)"></div>
<div style="top:203px;height:4px;background:linear-gradient(90deg,#7295f4 0%,#7295f4 2%,#7093f3 3.5%,#6c8ff1 6.6%,#6282ea 12.9%,#5e7de7 14.5%,#4f69d9 23.8%,#4961d2 30.1%,#485fd1 32.4%,#465ecf 34%,#455cce 37.1%,#445acc 38.7%,#445acc 40.2%,#4358cb 41.8%,#4358cb 44.9%,#4257c9 46.5%,#4257c9 50.4%,#4055c8 52%,#4055c8 66.8%,#4257c9 68.4%,#4257c9 69.9%,#445acc 72.3%,#455cce 73.8%,#4961d2 77%,#516ddb 82.4%,#5572df 84%,#5673e0 84.8%,#5977e3 85.5%,#5a78e4 86.3%,#5d7ce6 87.1%,#5f7fe8 88.7%,#6687ed 91%,#688aef 92.6%,#6e90f2 94.9%,#7093f3 97.3%,#7295f4 100%)"></div>
<div style="top:207px;height:4px;background:linear-gradient(90deg,#7295f4 0%,#7295f4 2%,#7093f3 3.5%,#6c8ff1 6.6%,#6180e9 13.7%,#5b7ae5 16%,#4f69d9 23.8%,#4c66d6 26.2%,#4b64d5 27.7%,#4a63d3 29.3%,#485fd1 30.9%,#465ecf 34%,#445acc 37.1%,#445acc 38.7%,#4358cb 40.2%,#4257c9 43.4%,#4257c9 44.9%,#4055c8 46.5%,#4055c8 50.4%,#3f53c6 52%,#3f53c6 65.2%,#4055c8 66.8%,#4055c8 68.4%,#4358cb 70.7%,#445acc 73%,#465ecf 74.6%,#485fd1 76.2%,#506bda 81.6%,#5470de 83.2%,#5a78e4 86.3%,#5d7ce6 87.1%,#6282ea 89.5%,#6b8df0 93.4%,#6f92f3 95.7%,#7093f3 98%,#7295f4 100%)"></div>
<div style="top:211px;height:5px;background:linear-gradient(90deg,#7295f4 0%,#7295f4 2%,#7093f3 3.5%,#6c8ff1 6.6%,#5e7de7 15.2%,#5a78e4 16.8%,#506bda 23%,#4e68d8 25.4%,#4b64d5 27%,#485fd1 31.6%,#455cce 34%,#445acc 37.1%,#4358cb 38.7%,#4257c9 41.8%,#4055c8 44.9%,#3f53c6 48%,#3f53c6 51.2%,#3e51c5 52.7%,#3e51c5 62.9%,#3f53c6 64.5%,#3f53c6 66.8%,#4055c8 68.4%,#4257c9 70.7%,#455cce 73.8%,#4961d2 77%,#4f69d9 80.9%,#516ddb 81.6%,#5977e3 85.5%,#5f7fe8 87.9%,#6788ee 91.8%,#6b8df0 93.4%,#6f92f3 95.7%,#7093f3 98%,#7295f4 100%)"></div>
<div style="top:216px;height:4px;background:linear-gradient(90deg,#7295f4 0%,#7295f4 2%,#7093f3 3.5%,#6c8ff1 6.6%,#5b7ae5 16.8%,#5572df 19.9%,#506bda 23%,#4e68d8 25.4%,#4b64d5 27%,#485fd1 30.9%,#455cce 33.2%,#445acc 36.3%,#4257c9 38.7%,#4257c9 40.2%,#4055c8 41.8%,#4055c8 43.4%,#3f53c6 44.9%,#3f53c6 47.3%,#3e51c5 48.8%,#3e51c5 53.5%,#3d50c3 55.1%,#3d50c3 60.5%,#3e51c5 62.1%,#3e51c5 64.5%,#3f53c6 66%,#3f53c6 67.6%,#4257c9 69.9%,#4358cb 72.3%,#465ecf 74.6%,#485fd1 76.2%,#4c66d6 79.3%,#506bda 80.9%,#536edd 82.4%,#5572df 83.2%,#5875e1 84.8%,#5e7de7 87.1%,#6180e9 88.7%,#6384eb 89.5%,#6f92f3 95.7%,#7295f4 98.8%,#7295f4 100%)"></div>
<div style="top:220px;height:4px;background:linear-gradient(90deg,#7295f4 0%,#7295f4 2%,#7093f3 3.5%,#6c8ff1 6.6%,#6687ed 11.3%,#6282ea 12.9%,#5875e1 19.1%,#5470de 20.7%,#506bda 23.8%,#4b64d5 27%,#485fd1 30.9%,#455cce 33.2%,#4358cb 37.1%,#4257c9 38.7%,#4055c8 41.8%,#3f53c6 43.4%,#3f53c6 44.9%,#3e51c5 46.5%,#3e51c5 48.8%,#3d50c3 50.4%,#3d50c3 62.9%,#3e51c5 64.5%,#3e51c5 66%,#4055c8 69.1%,#4358cb 71.5%,#445acc 73%,#4961d2 76.2%,#4961d2 77%,#4e68d8 79.3%,#516ddb 81.6%,#5572df 83.2%,#5673e0 84%,#5977e3 84.8%,#5b7ae5 86.3%,#6384eb 89.5%,#6f92f3 95.7%,#7295f4 98.8%,#7295f4 100%)"></div>
<div style="top:224px;height:5px;background:linear-gradient(90deg,#7295f4 0%,#7295f4 2%,#7093f3 3.5%,#6b8df0 8.2%,#6384eb 12.9%,#6180e9 13.7%,#4e68d8 25.4%,#4b64d5 27%,#4961d2 29.3%,#465ecf 31.6%,#455cce 33.2%,#4358cb 35.5%,#4257c9 38.7%,#3f53c6 41%,#3f53c6 43.4%,#3e51c5 44.9%,#3e51c5 46.5%,#3d50c3 48%,#3d50c3 51.2%,#3c4ec2 52.7%,#3c4ec2 59.8%,#3d50c3 61.3%,#3d50c3 63.7%,#3e51c5 65.2%,#3f53c6 67.6%,#4257c9 69.9%,#4358cb 71.5%,#465ecf 74.6%,#506bda 80.9%,#5470de 82.4%,#5a78e4 85.5%,#5d7ce6 86.3%,#6384eb 89.5%,#6788ee 91%,#7093f3 96.5%,#7295f4 100%)"></div>
<div style="top:229px;height:4px;background:linear-gradient(90deg,#7295f4 0%,#7295f4 2%,#7093f3 3.5%,#6b8df0 8.2%,#6180e9 14.5%,#5b7ae5 16.8%,#4b64d5 27%,#4961d2 29.3%,#455cce 32.4%,#4358cb 36.3%,#4055c8 38.7%,#4055c8 40.2%,#3e51c5 42.6%,#3e51c5 44.9%,#3d50c3 46.5%,#3d50c3 48.8%,#3c4ec2 50.4%,#3c4ec2 61.3%,#3d50c3 62.9%,#3d50c3 64.5%,#3f53c6 66.8%,#4055c8 69.1%,#445acc 72.3%,#455cce 73.8%,#4e68d8 79.3%,#5d7ce6 86.3%,#6282ea 88.7%,#688aef 91.8%,#7093f3 96.5%,#7295f4 100%)"></div>
<div style="top:233px;height:4px;background:linear-gradient(90deg,#7295f4 0%,#7295f4 2%,#7093f3 3.5%,#6e90f2 6.6%,#5f7fe8 15.2%,#5977e3 18.4%,#4c66d6 26.2%,#4a63d3 28.5%,#485fd1 30.1%,#4257c9 37.1%,#4055c8 39.5%,#3e51c5 41.8%,#3e51c5 44.1%,#3d50c3 45.7%,#3d50c3 47.3%,#3c4ec2 48.8%,#3c4ec2 52.7%,#3b4cc0 54.3%,#3b4cc0 56.6%,#3c4ec2 58.2%,#3c4ec2 62.1%,#3d50c3 63.7%,#3e51c5 66%,#4055c8 69.1%,#445acc 72.3%,#4b64d5 77.7%,#4e68d8 78.5%,#536edd 81.6%,#5572df 82.4%,#5875e1 84%,#5b7ae5 85.5%,#6788ee 91%,#6c8ff1 93.4%,#6e90f2 94.9%,#7295f4 98.8%,#7295f4 100%)"></div>
<div style="top:237px;height:4px;background:linear-gradient(90deg,#7295f4 0%,#7295f4 2%,#7093f3 3.5%,#6e90f2 6.6%,#5b7ae5 17.6%,#5572df 20.7%,#4c66d6 26.2%,#4a63d3 28.5%,#485fd1 30.1%,#445acc 34%,#4257c9 36.3%,#4055c8 38.7%,#3f53c6 40.2%,#3e51c5 43.4%,#3d50c3 44.9%,#3c4ec2 48%,#3c4ec2 50.4%,#3b4cc0 52%,#3b4cc0 58.2%,#3c4ec2 59.8%,#3c4ec2 62.1%,#3d50c3 63.7%,#3e51c5 66%,#4055c8 69.1%,#445acc 72.3%,#506bda 80.1%,#5673e0 83.2%,#5977e3 84%,#5b7ae5 85.5%,#6180e9 87.9%,#6384eb 88.7%,#6788ee 91%,#6b8df0 92.6%,#7093f3 96.5%,#7295f4 100%)"></div>
<div style="top:241px;height:5px;background:linear-gradient(90deg,#7295f4 0%,#7295f4 2%,#7093f3 3.5%,#6e90f2 6.6%,#5977e3 19.1%,#506bda 23.8%,#4c66d6 27%,#4961d2 29.3%,#465ecf 31.6%,#4358cb 34.8%,#4257c9 37.1%,#3f53c6 39.5%,#3e51c5 42.6%,#3d50c3 44.1%,#3c4ec2 47.3%,#3c4ec2 48.8%,#3b4cc0 50.4%,#3b4cc0 59%,#3c4ec2 60.5%,#3c4ec2 62.1%,#3d50c3 63.7%,#3e51c5 66%,#4055c8 69.1%,#445acc 72.3%,#4f69d9 79.3%,#516ddb 80.1%,#5572df 82.4%,#5977e3 84%,#5a78e4 84.8%,#5d7ce6 85.5%,#5f7fe8 87.1%,#6384eb 88.7%,#6e90f2 94.1%,#7093f3 97.3%,#7295f4 98.8%,#7295f4 100%)"></div>
<div style="top:246px;height:4px;background:linear-gradient(90deg,#7295f4 0%,#7295f4 2%,#7093f3 3.5%,#6e90f2 6.6%,#5977e3 19.1%,#4961d2 29.3%,#465ecf 31.6%,#4358cb 34.8%,#4257c9 37.1%,#3f53c6 39.5%,#3e51c5 42.6%,#3d50c3 44.1%,#3c4ec2 47.3%,#3b4cc0 50.4%,#3b4cc0 59.8%,#3c4ec2 61.3%,#3d50c3 64.5%,#3f53c6 66.8%,#4055c8 68.4%,#445acc 71.5%,#4c66d6 77.7%,#506bda 79.3%,#536edd 80.9%,#5572df 81.6%,#5e7de7 86.3%,#6282ea 87.9%,#6485ec 89.5%,#6a8bef 91.8%,#6f92f3 94.9%,#7093f3 97.3%,#7295f4 98.8%,#7295f4 100%)"></div>
<div style="top:250px;height:4px;background:linear-gradient(90deg,#7295f4 0%,#7295f4 2%,#7093f3 3.5%,#6e90f2 6.6%,#6a8bef 9%,#6687ed 12.1%,#6384eb 13.7%,#6180e9 14.5%,#4e68d8 26.2%,#4a63d3 28.5%,#4961d2 30.1%,#455cce 32.4%,#445acc 34%,#4257c9 36.3%,#4055c8 38.7%,#3e51c5 41%,#3d50c3 44.1%,#3c4ec2 45.7%,#3c4ec2 47.3%,#3b4cc0 48.8%,#3b4cc0 59.8%,#3c4ec2 61.3%,#3d50c3 64.5%,#3f53c6 66.8%,#445acc 71.5%,#506bda 79.3%,#5673e0 82.4%,#5977e3 83.2%,#5f7fe8 86.3%,#688aef 91%,#6f92f3 94.9%,#7093f3 97.3%,#7295f4 98.8%,#7295f4 100%)"></div>
<div style="top:254px;height:5px;background:linear-gradient(90deg,#7295f4 0%,#7295f4 2%,#7093f3 3.5%,#6e90f2 6.6%,#6a8bef 9%,#6687ed 12.1%,#5f7fe8 16%,#5977e3 19.1%,#4b64d5 27.7%,#4961d2 30.1%,#455cce 33.2%,#4257c9 36.3%,#4055c8 38.7%,#3e51c5 41%,#3d50c3 44.1%,#3c4ec2 45.7%,#3c4ec2 47.3%,#3b4cc0 48.8%,#3b4cc0 59%,#3c4ec2 60.5%,#3c4ec2 62.1%,#3e51c5 64.5%,#3f53c6 66.8%,#445acc 70.7%,#455cce 72.3%,#4f69d9 78.5%,#516ddb 79.3%,#5572df 81.6%,#5977e3 83.2%,#5b7ae5 84.8%,#6180e9 87.1%,#6384eb 87.9%,#6f92f3 94.9%,#7093f3 97.3%,#7295f4 98.8%,#7295f4 100%)"></div>
<div style="top:259px;height:4px;background:linear-gradient(90deg,#7295f4 0%,#7295f4 2%,#7093f3 3.5%,#6f92f3 5.9%,#6b8df0 8.2%,#688aef 10.5%,#5b7ae5 18.4%,#5572df 21.5%,#4e68d8 26.2%,#4c66d6 27.7%,#485fd1 30.9%,#455cce 33.2%,#4257c9 36.3%,#4055c8 38.7%,#3e51c5 41%,#3e51c5 42.6%,#3c4ec2 44.9%,#3c4ec2 47.3%,#3b4cc0 48.8%,#3b4cc0 59%,#3c4ec2 60.5%,#3d50c3 63.7%,#3f53c6 66%,#4055c8 67.6%,#445acc 70.7%,#485fd1 73%,#4961d2 74.6%,#4c66d6 76.2%,#5470de 80.9%,#5d7ce6 84.8%,#5f7fe8 86.3%,#6384eb 87.9%,#6f92f3 94.9%,#7093f3 97.3%,#7295f4 98.8%,#7295f4 100%)"></div>
<div style="top:263px;height:4px;background:linear-gradient(90deg,#7295f4 0%,#7295f4 2%,#7093f3 3.5%,#6f92f3 5.9%,#6b8df0 8.2%,#688aef 10.5%,#536edd 23.8%,#485fd1 30.9%,#445acc 34.8%,#3f53c6 39.5%,#3e51c5 42.6%,#3d50c3 44.1%,#3c4ec2 47.3%,#3b4cc0 50.4%,#3b4cc0 58.2%,#3c4ec2 59.8%,#3c4ec2 61.3%,#3e51c5 63.7%,#3f53c6 66%,#445acc 69.9%,#455cce 71.5%,#516ddb 79.3%,#5572df 80.9%,#5875e1 82.4%,#5b7ae5 84%,#6282ea 87.1%,#6788ee 90.2%,#6b8df0 91.8%,#6e90f2 94.1%,#7093f3 96.5%,#7295f4 100%)"></div>
<div style="top:267px;height:5px;background:linear-gradient(90deg,#7295f4 0%,#7295f4 2%,#7093f3 3.5%,#6f92f3 5.9%,#6b8df0 9%,#5673e0 21.5%,#4b64d5 28.5%,#4a63d3 30.1%,#455cce 33.2%,#445acc 34.8%,#4257c9 37.1%,#4055c8 39.5%,#3e51c5 41.8%,#3d50c3 44.9%,#3c4ec2 46.5%,#3c4ec2 48%,#3b4cc0 49.6%,#3b4cc0 57.4%,#3c4ec2 59%,#3c4ec2 60.5%,#3d50c3 62.1%,#3e51c5 64.5%,#4055c8 66%,#4257c9 68.4%,#465ecf 71.5%,#485fd1 73%,#4e68d8 77%,#5572df 80.9%,#5977e3 82.4%,#5b7ae5 84%,#6180e9 86.3%,#6485ec 88.7%,#6a8bef 91%,#6c8ff1 92.6%,#6e90f2 94.1%,#7093f3 96.5%,#7295f4 100%)"></div>
<div style="top:272px;height:4px;background:linear-gradient(90deg,#7295f4 0%,#7295f4 2%,#7093f3 3.5%,#6f92f3 5.9%,#6b8df0 9%,#5673e0 21.5%,#4b64d5 28.5%,#4961d2 30.9%,#455cce 34%,#4257c9 37.1%,#4055c8 39.5%,#3e51c5 41.8%,#3d50c3 44.9%,#3c4ec2 48%,#3b4cc0 51.2%,#3b4cc0 56.6%,#3c4ec2 58.2%,#3c4ec2 59.8%,#3d50c3 61.3%,#3e51c5 63.7%,#4055c8 66.8%,#445acc 69.1%,#455cce 70.7%,#536edd 79.3%,#5572df 80.1%,#5a78e4 83.2%,#5d7ce6 84%,#6282ea 87.1%,#688aef 90.2%,#6c8ff1 92.6%,#6e90f2 94.1%,#7093f3 96.5%,#7295f4 100%)"></div>
<div style="top:276px;height:4px;background:linear-gradient(90deg,#7295f4 0%,#7295f4 2%,#7093f3 3.5%,#6f92f3 5.9%,#6b8df0 9%,#6788ee 11.3%,#6384eb 14.5%,#5e7de7 17.6%,#5a78e4 19.1%,#4f69d9 26.2%,#4c66d6 28.5%,#485fd1 31.6%,#455cce 34%,#4358cb 36.3%,#3f53c6 41%,#3e51c5 43.4%,#3d50c3 44.9%,#3c4ec2 48%,#3c4ec2 50.4%,#3b4cc0 52%,#3b4cc0 55.1%,#3c4ec2 56.6%,#3c4ec2 59%,#3d50c3 60.5%,#3e51c5 62.9%,#4055c8 66%,#445acc 69.1%,#465ecf 70.7%,#485fd1 72.3%,#4f69d9 77%,#516ddb 77.7%,#5875e1 81.6%,#5b7ae5 83.2%,#5f7fe8 85.5%,#6384eb 87.1%,#6e90f2 93.4%,#7093f3 96.5%,#7295f4 100%)"></div>
<div style="top:280px;height:5px;background:linear-gradient(90deg,#7295f4 0%,#7295f4 2%,#7093f3 3.5%,#6f92f3 5.9%,#6b8df0 9%,#6485ec 13.7%,#536edd 24.6%,#4961d2 30.9%,#465ecf 33.2%,#4358cb 36.3%,#4257c9 38.7%,#3f53c6 41%,#3e51c5 44.1%,#3d50c3 45.7%,#3c4ec2 48.8%,#3c4ec2 58.2%,#3d50c3 59.8%,#3e51c5 62.1%,#4055c8 65.2%,#445acc 68.4%,#455cce 69.9%,#5572df 80.1%,#5977e3 81.6%,#5f7fe8 84.8%,#6e90f2 93.4%,#7093f3 96.5%,#7295f4 100%)"></div>
<div style="top:285px;height:4px;background:linear-gradient(90deg,#7295f4 0%,#7295f4 2%,#7093f3 3.5%,#6f92f3 5.9%,#6b8df0 9%,#6687ed 12.9%,#536edd 24.6%,#4b64d5 29.3%,#4961d2 31.6%,#455cce 34.8%,#4358cb 37.1%,#3f53c6 41.8%,#3e51c5 44.9%,#3d50c3 46.5%,#3d50c3 48%,#3c4ec2 49.6%,#3c4ec2 56.6%,#3d50c3 58.2%,#3d50c3 59.8%,#3e51c5 61.3%,#3f53c6 63.7%,#4257c9 65.2%,#4358cb 67.6%,#485fd1 70.7%,#4961d2 72.3%,#516ddb 77.7%,#5572df 79.3%,#5a78e4 82.4%,#5d7ce6 83.2%,#6e90f2 93.4%,#7093f3 96.5%,#7295f4 100%)"></div>
<div style="top:289px;height:4px;background:linear-gradient(90deg,#7295f4 0%,#7295f4 2%,#7093f3 3.5%,#6f92f3 5.9%,#6b8df0 9%,#6687ed 12.9%,#536edd 24.6%,#4f69d9 27%,#4c66d6 29.3%,#4961d2 31.6%,#465ecf 34%,#4358cb 37.1%,#4257c9 39.5%,#3f53c6 41.8%,#3f53c6 43.4%,#3e51c5 44.9%,#3d50c3 48%,#3d50c3 49.6%,#3c4ec2 51.2%,#3c4ec2 55.1%,#3d50c3 56.6%,#3d50c3 59%,#3f53c6 61.3%,#3f53c6 62.9%,#445acc 67.6%,#4c66d6 73.8%,#5875e1 80.9%,#5b7ae5 82.4%,#6384eb 87.1%,#6788ee 88.7%,#6b8df0 91.8%,#6f92f3 94.1%,#7093f3 97.3%,#7295f4 98.8%,#7295f4 100%)"></div>
<div style="top:293px;height:5px;background:linear-gradient(90deg,#7295f4 0%,#7295f4 2%,#7093f3 3.5%,#6f92f3 5.9%,#688aef 11.3%,#5470de 23.8%,#516ddb 26.2%,#4a63d3 30.9%,#4961d2 32.4%,#455cce 35.5%,#4358cb 37.9%,#4257c9 40.2%,#3f53c6 42.6%,#3f53c6 44.1%,#3e51c5 45.7%,#3d50c3 48.8%,#3d50c3 57.4%,#3e51c5 59%,#3f53c6 62.1%,#4257c9 64.5%,#4358cb 66%,#465ecf 69.1%,#4c66d6 73.8%,#5470de 78.5%,#5a78e4 81.6%,#5f7fe8 84.8%,#6384eb 86.3%,#6b8df0 91%,#6e90f2 93.4%,#7093f3 95.7%,#7093f3 97.3%,#7295f4 98.8%,#7295f4 100%)"></div>
<div style="top:298px;height:4px;background:linear-gradient(90deg,#7295f4 0%,#7295f4 2%,#7093f3 3.5%,#6f92f3 5.9%,#688aef 11.3%,#6384eb 14.5%,#6282ea 16%,#536edd 25.4%,#4c66d6 29.3%,#4a63d3 31.6%,#485fd1 33.2%,#4257c9 40.2%,#4055c8 41.8%,#3f53c6 44.9%,#3e51c5 46.5%,#3e51c5 48%,#3d50c3 49.6%,#3d50c3 55.9%,#3e51c5 57.4%,#3e51c5 59%,#3f53c6 60.5%,#4055c8 62.9%,#445acc 66%,#455cce 67.6%,#4961d2 70.7%,#5b7ae5 82.4%,#6180e9 84.8%,#6c8ff1 91.8%,#6e90f2 93.4%,#7093f3 95.7%,#7093f3 97.3%,#7295f4 98.8%,#7295f4 100%)"></div>
<div style="top:302px;height:4px;background:linear-gradient(90deg,#7295f4 0%,#7295f4 2%,#7093f3 3.5%,#6f92f3 5.9%,#688aef 11.3%,#6282ea 16%,#536edd 25.4%,#4c66d6 30.1%,#4a63d3 31.6%,#4961d2 33.2%,#455cce 36.3%,#445acc 37.9%,#4257c9 40.2%,#4055c8 43.4%,#3f53c6 44.9%,#3e51c5 48%,#3e51c5 57.4%,#3f53c6 59%,#4055c8 62.1%,#4358cb 64.5%,#445acc 66%,#4a63d3 70.7%,#4b64d5 72.3%,#5673e0 79.3%,#5977e3 80.1%,#6c8ff1 91.8%,#6e90f2 93.4%,#7093f3 95.7%,#7093f3 97.3%,#7295f4 98.8%,#7295f4 100%)"></div>
<div style="top:306px;height:5px;background:linear-gradient(90deg,#7295f4 0%,#7295f4 2%,#7093f3 3.5%,#6f92f3 5.9%,#6c8ff1 8.2%,#6b8df0 9.8%,#6788ee 12.1%,#6384eb 15.2%,#5470de 24.6%,#516ddb 27%,#4c66d6 30.1%,#4a63d3 32.4%,#455cce 37.1%,#4358cb 39.5%,#4257c9 41.8%,#4055c8 43.4%,#3f53c6 46.5%,#3e51c5 49.6%,#3e51c5 55.9%,#3f53c6 57.4%,#3f53c6 59%,#4055c8 60.5%,#4257c9 62.9%,#445acc 65.2%,#4961d2 69.9%,#5d7ce6 82.4%,#6e90f2 92.6%,#7093f3 97.3%,#7295f4 98.8%,#7295f4 100%)"></div>
<div style="top:311px;height:4px;background:linear-gradient(90deg,#7295f4 0%,#7295f4 2%,#7093f3 3.5%,#6f92f3 6.6%,#6b8df0 9.8%,#6485ec 14.5%,#5b7ae5 19.9%,#5977e3 22.3%,#4f69d9 28.5%,#4c66d6 30.9%,#4a63d3 32.4%,#4961d2 34%,#455cce 37.1%,#4358cb 41%,#4055c8 43.4%,#4055c8 45.7%,#3f53c6 47.3%,#3f53c6 50.4%,#3e51c5 52%,#3f53c6 55.1%,#3f53c6 57.4%,#4055c8 59%,#4257c9 62.1%,#445acc 64.5%,#4961d2 69.1%,#4c66d6 71.5%,#4e68d8 73%,#5b7ae5 81.6%,#6180e9 84%,#688aef 88.7%,#6b8df0 91%,#6f92f3 94.1%,#7093f3 97.3%,#7295f4 98.8%,#7295f4 100%)"></div>
<div style="top:315px;height:4px;background:linear-gradient(90deg,#7295f4 0%,#7295f4 2.7%,#7093f3 4.3%,#6f92f3 6.6%,#6b8df0 9.8%,#6687ed 13.7%,#6180e9 16.8%,#5d7ce6 19.9%,#516ddb 27%,#506bda 28.5%,#4c66d6 30.9%,#4a63d3 33.2%,#455cce 37.9%,#4358cb 41.8%,#4257c9 43.4%,#4055c8 46.5%,#3f53c6 49.6%,#3f53c6 55.9%,#4055c8 57.4%,#4055c8 59%,#4358cb 61.3%,#4358cb 62.9%,#455cce 64.5%,#465ecf 66.8%,#4a63d3 69.1%,#4b64d5 70.7%,#5f7fe8 83.2%,#6a8bef 89.5%,#6b8df0 91%,#6f92f3 94.1%,#7093f3 97.3%,#7295f4 98.8%,#7295f4 100%)"></div>
<div style="top:319px;height:4px;background:linear-gradient(90deg,#7295f4 0%,#7295f4 2.7%,#7093f3 4.3%,#6f92f3 6.6%,#6b8df0 9.8%,#6687ed 13.7%,#6485ec 15.2%,#5572df 24.6%,#5470de 26.2%,#4e68d8 30.1%,#4c66d6 31.6%,#4a63d3 33.2%,#4961d2 34.8%,#465ecf 37.1%,#455cce 39.5%,#4358cb 41.8%,#4257c9 44.9%,#4055c8 46.5%,#4055c8 50.4%,#3f53c6 52%,#4055c8 55.1%,#4055c8 57.4%,#4257c9 59%,#4358cb 61.3%,#465ecf 66%,#4c66d6 70.7%,#506bda 73.8%,#6282ea 84.8%,#6b8df0 90.2%,#7093f3 95.7%,#7093f3 97.3%,#7295f4 98.8%,#7295f4 100%)"></div>
<div style="top:323px;height:5px;background:linear-gradient(90deg,#7295f4 0%,#7295f4 2.7%,#7093f3 4.3%,#6f92f3 6.6%,#688aef 12.1%,#6282ea 16.8%,#5a78e4 21.5%,#5875e1 23.8%,#516ddb 27.7%,#506bda 29.3%,#4c66d6 31.6%,#4961d2 35.5%,#465ecf 37.9%,#455cce 40.2%,#4358cb 42.6%,#4358cb 44.1%,#4257c9 45.7%,#4257c9 47.3%,#4055c8 48.8%,#4055c8 55.1%,#4257c9 56.6%,#4257c9 58.2%,#4358cb 59.8%,#445acc 62.1%,#465ecf 64.5%,#485fd1 66%,#4c66d6 69.9%,#4e68d8 71.5%,#6485ec 85.5%,#6788ee 87.9%,#6c8ff1 91%,#6e90f2 93.4%,#7093f3 95.7%,#7093f3 97.3%,#7295f4 98.8%,#7295f4 100%)"></div>
<div style="top:328px;height:4px;background:linear-gradient(90deg,#7295f4 0%,#7295f4 2.7%,#7093f3 4.3%,#6f92f3 6.6%,#688aef 12.1%,#6282ea 16.8%,#5e7de7 19.1%,#5b7ae5 21.5%,#5470de 26.2%,#516ddb 28.5%,#4f69d9 30.1%,#4c66d6 32.4%,#4b64d5 34%,#4961d2 35.5%,#485fd1 37.9%,#455cce 40.2%,#4358cb 44.1%,#4358cb 45.7%,#4257c9 47.3%,#4257c9 56.6%,#4358cb 58.2%,#4358cb 59.8%,#465ecf 64.5%,#4b64d5 68.4%,#4c66d6 69.9%,#506bda 72.3%,#536edd 74.6%,#688aef 87.9%,#6b8df0 90.2%,#7093f3 94.9%,#7093f3 96.5%,#7295f4 98%,#7295f4 100%)"></div>
<div style="top:332px;height:4px;background:linear-gradient(90deg,#7295f4 0%,#7295f4 2.7%,#7093f3 4.3%,#6f92f3 6.6%,#6687ed 14.5%,#6180e9 17.6%,#5d7ce6 20.7%,#5875e1 23.8%,#5572df 26.2%,#516ddb 28.5%,#506bda 30.1%,#4c66d6 32.4%,#485fd1 37.9%,#465ecf 40.2%,#445acc 43.4%,#4358cb 46.5%,#4257c9 49.6%,#4257c9 55.1%,#4358cb 56.6%,#4358cb 58.2%,#445acc 59.8%,#465ecf 63.7%,#4961d2 66%,#4c66d6 69.1%,#506bda 72.3%,#5875e1 77%,#5977e3 78.5%,#6a8bef 88.7%,#6b8df0 90.2%,#7093f3 94.9%,#7093f3 96.5%,#7295f4 98%,#7295f4 100%)"></div>
<div style="top:336px;height:5px;background:linear-gradient(90deg,#7295f4 0%,#7295f4 2.7%,#7093f3 4.3%,#6f92f3 6.6%,#6c8ff1 9%,#6b8df0 10.5%,#6485ec 15.2%,#6282ea 17.6%,#5a78e4 22.3%,#5875e1 24.6%,#5470de 27%,#516ddb 29.3%,#4f69d9 30.9%,#4961d2 37.1%,#485fd1 39.5%,#455cce 41.8%,#445acc 44.9%,#4358cb 48%,#4358cb 56.6%,#445acc 58.2%,#455cce 61.3%,#485fd1 63.7%,#4961d2 65.2%,#4c66d6 69.1%,#516ddb 72.3%,#536edd 73.8%,#6384eb 84%,#6485ec 85.5%,#6a8bef 88.7%,#6b8df0 90.2%,#6f92f3 93.4%,#7093f3 96.5%,#7295f4 98%,#7295f4 100%)"></div>
<div style="top:341px;height:4px;background:linear-gradient(90deg,#7295f4 0%,#7295f4 2.7%,#7093f3 4.3%,#6f92f3 6.6%,#6c8ff1 9%,#6b8df0 10.5%,#6687ed 14.5%,#6485ec 16%,#5e7de7 19.9%,#5b7ae5 22.3%,#5673e0 25.4%,#5470de 27.7%,#506bda 30.9%,#4c66d6 34%,#4b64d5 35.5%,#4a63d3 37.1%,#485fd1 40.2%,#455cce 42.6%,#455cce 44.1%,#445acc 45.7%,#445acc 48%,#4358cb 49.6%,#4358cb 53.5%,#445acc 55.1%,#445acc 57.4%,#455cce 59%,#465ecf 61.3%,#4961d2 63.7%,#4a63d3 66%,#506bda 70.7%,#536edd 73%,#5875e1 76.2%,#5977e3 77.7%,#6687ed 85.5%,#6a8bef 88.7%,#6f92f3 93.4%,#7093f3 96.5%,#7295f4 98%,#7295f4 100%)"></div>
<div style="top:345px;height:4px;background:linear-gradient(90deg,#7295f4 0%,#7295f4 2.7%,#7093f3 4.3%,#6f92f3 6.6%,#6c8ff1 9%,#6b8df0 10.5%,#6384eb 16.8%,#6180e9 18.4%,#5d7ce6 21.5%,#5977e3 23.8%,#5875e1 25.4%,#5470de 27.7%,#516ddb 30.1%,#4e68d8 34%,#4b64d5 35.5%,#4a63d3 37.9%,#485fd1 41%,#465ecf 42.6%,#455cce 45.7%,#445acc 48.8%,#445acc 55.9%,#455cce 57.4%,#465ecf 60.5%,#4961d2 62.9%,#4a63d3 65.2%,#506bda 70.7%,#5470de 73%,#5673e0 75.4%,#5e7de7 80.1%,#6180e9 82.4%,#6788ee 86.3%,#6a8bef 88.7%,#6f92f3 93.4%,#7093f3 96.5%,#7295f4 98%,#7295f4 100%)"></div>
<div style="top:349px;height:5px;background:linear-gradient(90deg,#7295f4 0%,#7295f4 2.7%,#7093f3 4.3%,#6f92f3 6.6%,#6c8ff1 9%,#6b8df0 10.5%,#6485ec 16%,#5d7ce6 21.5%,#5673e0 26.2%,#5470de 28.5%,#506bda 31.6%,#4c66d6 34.8%,#4b64d5 37.1%,#4a63d3 38.7%,#485fd1 41.8%,#465ecf 43.4%,#465ecf 44.9%,#455cce 46.5%,#455cce 56.6%,#465ecf 58.2%,#485fd1 61.3%,#4a63d3 64.5%,#4c66d6 66.8%,#506bda 69.9%,#5470de 73%,#5875e1 75.4%,#5977e3 77%,#6384eb 83.2%,#6485ec 84.8%,#688aef 87.1%,#6b8df0 89.5%,#6e90f2 91.8%,#7093f3 96.5%,#7295f4 98%,#7295f4 100%)"></div>
<div style="top:354px;height:4px;background:linear-gradient(90deg,#7295f4 0%,#7295f4 2.7%,#7093f3 4.3%,#6f92f3 6.6%,#6c8ff1 9%,#6a8bef 12.1%,#6687ed 15.2%,#6384eb 16.8%,#6282ea 18.4%,#5e7de7 20.7%,#5b7ae5 23%,#5875e1 25.4%,#5572df 27.7%,#506bda 31.6%,#4e68d8 34.8%,#4c66d6 36.3%,#4b64d5 37.9%,#4a63d3 39.5%,#485fd1 42.6%,#465ecf 45.7%,#465ecf 47.3%,#455cce 48.8%,#455cce 54.3%,#465ecf 55.9%,#465ecf 57.4%,#485fd1 59%,#4961d2 62.1%,#4c66d6 66%,#506bda 69.1%,#536edd 71.5%,#5572df 73%,#5673e0 74.6%,#5d7ce6 78.5%,#6180e9 81.6%,#6485ec 84%,#6788ee 86.3%,#6b8df0 89.5%,#6e90f2 91.8%,#7093f3 96.5%,#7295f4 98%,#7295f4 100%)"></div>
<div style="top:358px;height:4px;background:linear-gradient(90deg,#7295f4 0%,#7295f4 2.7%,#7093f3 4.3%,#6f92f3 7.4%,#6687ed 15.2%,#6485ec 16.8%,#6180e9 19.1%,#5d7ce6 22.3%,#5a78e4 23.8%,#5875e1 26.2%,#5673e0 27.7%,#536edd 30.1%,#4e68d8 35.5%,#4c66d6 37.1%,#4b64d5 38.7%,#4a63d3 40.2%,#4961d2 41.8%,#485fd1 44.9%,#465ecf 48%,#465ecf 55.9%,#485fd1 57.4%,#485fd1 59%,#4a63d3 62.1%,#4c66d6 64.5%,#4f69d9 67.6%,#5470de 71.5%,#5673e0 73.8%,#5977e3 75.4%,#5b7ae5 77.7%,#6180e9 80.9%,#6282ea 82.4%,#6788ee 85.5%,#6b8df0 89.5%,#6e90f2 91.8%,#7093f3 96.5%,#7295f4 98%,#7295f4 100%)"></div>
<div style="top:362px;height:5px;background:linear-gradient(90deg,#7295f4 0%,#7295f4 2.7%,#7093f3 4.3%,#6f92f3 7.4%,#6a8bef 12.1%,#6485ec 16.8%,#5d7ce6 22.3%,#5b7ae5 23.8%,#5875e1 26.2%,#5470de 30.1%,#506bda 33.2%,#4e68d8 36.3%,#4c66d6 37.9%,#4b64d5 39.5%,#4a63d3 41%,#4961d2 44.1%,#485fd1 45.7%,#485fd1 48.8%,#465ecf 50.4%,#465ecf 52.7%,#485fd1 54.3%,#485fd1 56.6%,#4961d2 58.2%,#4961d2 59.8%,#4b64d5 62.1%,#4c66d6 64.5%,#506bda 67.6%,#536edd 70.7%,#5673e0 73%,#5875e1 74.6%,#5d7ce6 77.7%,#6180e9 80.9%,#6384eb 82.4%,#6485ec 84%,#688aef 86.3%,#6c8ff1 91%,#6f92f3 93.4%,#7093f3 96.5%,#7295f4 98%,#7295f4 100%)"></div>
<div style="top:367px;height:4px;background:linear-gradient(90deg,#7295f4 0%,#7295f4 2.7%,#7093f3 4.3%,#6f92f3 7.4%,#6c8ff1 9.8%,#6b8df0 11.3%,#6485ec 16.8%,#6282ea 19.1%,#5e7de7 21.5%,#5b7ae5 23.8%,#5875e1 27%,#5673e0 28.5%,#506bda 34%,#4e68d8 36.3%,#4b64d5 40.2%,#4a63d3 43.4%,#4961d2 44.9%,#4961d2 46.5%,#485fd1 48%,#485fd1 54.3%,#4961d2 55.9%,#4961d2 58.2%,#4a63d3 59.8%,#4b64d5 62.1%,#516ddb 69.1%,#5572df 71.5%,#5673e0 73%,#5977e3 74.6%,#5b7ae5 77%,#5f7fe8 79.3%,#6282ea 81.6%,#688aef 86.3%,#6f92f3 92.6%,#7093f3 96.5%,#7295f4 98%,#7295f4 100%)"></div>
<div style="top:371px;height:4px;background:linear-gradient(90deg,#7295f4 0%,#7295f4 2.7%,#7093f3 4.3%,#6f92f3 7.4%,#6c8ff1 9.8%,#6b8df0 11.3%,#6282ea 19.1%,#5b7ae5 24.6%,#5875e1 27.7%,#5572df 29.3%,#5470de 30.9%,#516ddb 33.2%,#506bda 34.8%,#4e68d8 37.1%,#4c66d6 40.2%,#4b64d5 41.8%,#4a63d3 43.4%,#4a63d3 44.9%,#4961d2 46.5%,#4961d2 55.9%,#4a63d3 57.4%,#4a63d3 59%,#4c66d6 61.3%,#4c66d6 62.9%,#506bda 66%,#516ddb 68.4%,#5875e1 73%,#5977e3 74.6%,#5d7ce6 77%,#6180e9 80.1%,#6687ed 84%,#6b8df0 88.7%,#6e90f2 91%,#7093f3 95.7%,#7295f4 98.8%,#7295f4 100%)"></div>
<div style="top:375px;height:4px;background:linear-gradient(90deg,#7295f4 0%,#7295f4 2.7%,#7093f3 4.3%,#6f92f3 7.4%,#6c8ff1 9.8%,#6a8bef 12.9%,#6687ed 16%,#6384eb 18.4%,#5e7de7 22.3%,#5b7ae5 24.6%,#5875e1 27.7%,#5470de 31.6%,#506bda 34.8%,#4e68d8 39.5%,#4c66d6 41%,#4b64d5 42.6%,#4a63d3 45.7%,#4a63d3 48%,#4961d2 49.6%,#4961d2 52.7%,#4a63d3 54.3%,#4a63d3 57.4%,#4b64d5 59%,#4c66d6 61.3%,#4f69d9 63.7%,#516ddb 67.6%,#5673e0 71.5%,#5875e1 73%,#5b7ae5 76.2%,#5f7fe8 78.5%,#6282ea 80.9%,#6a8bef 87.1%,#6b8df0 88.7%,#6e90f2 91%,#7093f3 95.7%,#7295f4 98.8%,#7295f4 100%)"></div>
<div style="top:379px;height:5px;background:linear-gradient(90deg,#7295f4 0%,#7295f4 2.7%,#7093f3 4.3%,#6f92f3 7.4%,#6c8ff1 9.8%,#6a8bef 12.9%,#6687ed 16%,#6282ea 19.9%,#5d7ce6 23.8%,#5b7ae5 25.4%,#5875e1 28.5%,#5673e0 30.1%,#536edd 34%,#4f69d9 37.1%,#4e68d8 40.2%,#4c66d6 41.8%,#4b64d5 44.9%,#4a63d3 48%,#4a63d3 55.1%,#4b64d5 56.6%,#4b64d5 58.2%,#4c66d6 59.8%,#4f69d9 63.7%,#516ddb 66.8%,#5572df 69.9%,#5673e0 71.5%,#5977e3 73%,#5b7ae5 75.4%,#6282ea 80.9%,#688aef 85.5%,#6c8ff1 90.2%,#6f92f3 92.6%,#7093f3 96.5%,#7295f4 98%,#7295f4 100%)"></div>
<div style="top:384px;height:4px;background:linear-gradient(90deg,#7295f4 0%,#7295f4 2.7%,#7093f3 4.3%,#6f92f3 7.4%,#6c8ff1 9.8%,#6a8bef 13.7%,#6282ea 19.9%,#5b7ae5 25.4%,#5875e1 28.5%,#536edd 34%,#506bda 37.1%,#4e68d8 41.8%,#4c66d6 43.4%,#4b64d5 46.5%,#4b64d5 55.9%,#4c66d6 57.4%,#4c66d6 59%,#4e68d8 60.5%,#4f69d9 62.9%,#516ddb 66%,#5470de 68.4%,#5875e1 72.3%,#5b7ae5 74.6%,#5e7de7 77%,#6282ea 80.1%,#6a8bef 86.3%,#6c8ff1 90.2%,#6f92f3 92.6%,#7093f3 96.5%,#7295f4 98%,#7295f4 100%)"></div>
<div style="top:388px;height:4px;background:linear-gradient(90deg,#7295f4 0%,#7295f4 2.7%,#7093f3 4.3%,#6f92f3 8.2%,#6c8ff1 10.5%,#6b8df0 12.1%,#688aef 14.5%,#6687ed 17.6%,#6282ea 19.9%,#5d7ce6 25.4%,#5a78e4 27%,#5875e1 30.1%,#5572df 31.6%,#536edd 35.5%,#506bda 37.9%,#4e68d8 42.6%,#4c66d6 45.7%,#4c66d6 48%,#4b64d5 49.6%,#4b64d5 52.7%,#4c66d6 54.3%,#4c66d6 57.4%,#4e68d8 59%,#4f69d9 61.3%,#506bda 62.9%,#516ddb 65.2%,#5470de 67.6%,#5875e1 71.5%,#5b7ae5 74.6%,#6282ea 80.1%,#6a8bef 86.3%,#6c8ff1 89.5%,#6f92f3 91.8%,#7093f3 96.5%,#7295f4 98%,#7295f4 100%)"></div>
<div style="top:392px;height:5px;background:linear-gradient(90deg,#7295f4 0%,#7295f4 2.7%,#7093f3 4.3%,#6f92f3 8.2%,#6c8ff1 10.5%,#6a8bef 13.7%,#6687ed 16.8%,#6282ea 20.7%,#5977e3 28.5%,#5875e1 30.1%,#5673e0 31.6%,#536edd 36.3%,#506bda 38.7%,#4f69d9 41.8%,#4e68d8 45.7%,#4c66d6 47.3%,#4c66d6 55.1%,#4e68d8 56.6%,#4f69d9 60.5%,#516ddb 63.7%,#5470de 66%,#5673e0 69.9%,#5977e3 71.5%,#5b7ae5 74.6%,#5f7fe8 77%,#6485ec 81.6%,#688aef 84.8%,#6a8bef 87.1%,#6c8ff1 88.7%,#6e90f2 91%,#6f92f3 92.6%,#7093f3 96.5%,#7295f4 98%,#7295f4 100%)"></div>
<div style="top:397px;height:4px;background:linear-gradient(90deg,#7295f4 0%,#7295f4 2.7%,#7093f3 4.3%,#6f92f3 8.2%,#6c8ff1 10.5%,#6a8bef 14.5%,#6282ea 20.7%,#5d7ce6 26.2%,#5a78e4 27.7%,#5977e3 30.1%,#5673e0 31.6%,#5572df 34%,#536edd 37.1%,#506bda 39.5%,#506bda 41%,#4f69d9 42.6%,#4e68d8 55.9%,#4f69d9 59%,#506bda 60.5%,#516ddb 62.9%,#5470de 65.2%,#5673e0 69.1%,#5977e3 70.7%,#5b7ae5 73.8%,#6282ea 79.3%,#688aef 84.8%,#6c8ff1 89.5%,#6f92f3 91.8%,#7093f3 96.5%,#7295f4 98%,#7295f4 100%)"></div>
<div style="top:401px;height:4px;background:linear-gradient(90deg,#7295f4 0%,#7295f4 2.7%,#7093f3 4.3%,#6f92f3 8.2%,#6c8ff1 10.5%,#6a8bef 14.5%,#6687ed 17.6%,#6282ea 21.5%,#5a78e4 28.5%,#5875e1 31.6%,#5673e0 33.2%,#536edd 37.9%,#516ddb 39.5%,#506bda 42.6%,#4f69d9 45.7%,#4f69d9 54.3%,#4f69d9 57.4%,#506bda 59%,#516ddb 62.1%,#5470de 64.5%,#5673e0 68.4%,#5977e3 69.9%,#5a78e4 72.3%,#5d7ce6 73.8%,#5f7fe8 77%,#6485ec 80.9%,#6b8df0 87.1%,#6c8ff1 89.5%,#6f92f3 91.8%,#7093f3 96.5%,#7295f4 98%,#7295f4 100%)"></div>
<div style="top:405px;height:5px;background:linear-gradient(90deg,#7295f4 0%,#7295f4 2.7%,#7093f3 4.3%,#6f92f3 8.2%,#6c8ff1 10.5%,#6a8bef 14.5%,#6687ed 17.6%,#6180e9 23%,#5d7ce6 26.2%,#5977e3 30.9%,#5673e0 33.2%,#5572df 35.5%,#536edd 38.7%,#516ddb 41.8%,#506bda 43.4%,#506bda 45.7%,#4f69d9 47.3%,#4f69d9 55.1%,#506bda 56.6%,#506bda 58.2%,#516ddb 59.8%,#536edd 62.9%,#5673e0 66.8%,#5875e1 69.1%,#5b7ae5 72.3%,#5e7de7 74.6%,#6282ea 78.5%,#688aef 84.8%,#6b8df0 87.1%,#6e90f2 89.5%,#6e90f2 91%,#7093f3 93.4%,#7093f3 95.7%,#7295f4 97.3%,#7295f4 100%)"></div>
<div style="top:410px;height:4px;background:linear-gradient(90deg,#7295f4 0%,#7295f4 3.5%,#7093f3 5.1%,#6f92f3 8.2%,#6e90f2 9.8%,#6c8ff1 12.1%,#6788ee 16.8%,#6687ed 19.1%,#6384eb 20.7%,#6282ea 22.3%,#5f7fe8 24.6%,#5d7ce6 27.7%,#5977e3 30.9%,#5875e1 33.2%,#5673e0 34.8%,#5470de 37.9%,#536edd 41%,#516ddb 42.6%,#516ddb 44.1%,#506bda 45.7%,#506bda 55.9%,#516ddb 57.4%,#516ddb 59%,#536edd 60.5%,#5572df 64.5%,#5673e0 66.8%,#5a78e4 69.9%,#5b7ae5 72.3%,#6282ea 77.7%,#6485ec 80.9%,#688aef 84%,#6c8ff1 88.7%,#6e90f2 90.2%,#7093f3 94.9%,#7295f4 98%,#7295f4 100%)"></div>
<div style="top:414px;height:4px;background:linear-gradient(90deg,#7295f4 0%,#7295f4 3.5%,#7093f3 5.1%,#6f92f3 9%,#6c8ff1 11.3%,#6a8bef 15.2%,#6687ed 18.4%,#6180e9 24.6%,#5d7ce6 27.7%,#5b7ae5 29.3%,#5977e3 31.6%,#5875e1 34%,#5673e0 35.5%,#5572df 37.9%,#5470de 39.5%,#536edd 42.6%,#516ddb 44.1%,#516ddb 47.3%,#506bda 48.8%,#506bda 52.7%,#516ddb 54.3%,#516ddb 57.4%,#536edd 59%,#5470de 62.1%,#5673e0 64.5%,#5673e0 66%,#5a78e4 69.1%,#5b7ae5 71.5%,#5f7fe8 74.6%,#6485ec 80.1%,#688aef 83.2%,#6a8bef 85.5%,#6c8ff1 88.7%,#6f92f3 91%,#7093f3 95.7%,#7295f4 97.3%,#7295f4 100%)"></div>
<div style="top:418px;height:5px;background:linear-gradient(90deg,#7295f4 0%,#7295f4 3.5%,#7093f3 5.1%,#6f92f3 9%,#6c8ff1 11.3%,#6a8bef 15.2%,#6788ee 17.6%,#6384eb 22.3%,#6180e9 23.8%,#5f7fe8 26.2%,#5b7ae5 29.3%,#5977e3 33.2%,#5673e0 35.5%,#5572df 38.7%,#5470de 40.2%,#5470de 41.8%,#536edd 43.4%,#536edd 45.7%,#516ddb 47.3%,#516ddb 54.3%,#536edd 55.9%,#536edd 58.2%,#5470de 59.8%,#5673e0 64.5%,#5977e3 66.8%,#5a78e4 69.1%,#5f7fe8 74.6%,#6282ea 77%,#6485ec 79.3%,#688aef 84%,#6b8df0 86.3%,#6c8ff1 88.7%,#6f92f3 91%,#7093f3 95.7%,#7295f4 97.3%,#7295f4 100%)"></div>
<div style="top:423px;height:4px;background:linear-gradient(90deg,#7295f4 0%,#7295f4 3.5%,#7093f3 5.1%,#6f92f3 9%,#6c8ff1 11.3%,#6c8ff1 12.9%,#6a8bef 16%,#6687ed 19.1%,#6180e9 25.4%,#5d7ce6 28.5%,#5977e3 33.2%,#5875e1 36.3%,#5673e0 37.9%,#5572df 40.2%,#5470de 41.8%,#5470de 44.1%,#536edd 45.7%,#536edd 55.9%,#5470de 57.4%,#5470de 59%,#5572df 60.5%,#5673e0 63.7%,#5977e3 66%,#5a78e4 68.4%,#5e7de7 72.3%,#6282ea 77%,#6788ee 81.6%,#6c8ff1 87.1%,#6e90f2 90.2%,#6f92f3 91.8%,#7093f3 95.7%,#7295f4 97.3%,#7295f4 100%)"></div>
<div style="top:427px;height:4px;background:linear-gradient(90deg,#7295f4 0%,#7295f4 3.5%,#7093f3 5.1%,#6f92f3 9%,#6e90f2 10.5%,#6c8ff1 12.9%,#6a8bef 16%,#6788ee 18.4%,#6384eb 23%,#6180e9 26.2%,#5d7ce6 29.3%,#5977e3 34%,#5977e3 35.5%,#5673e0 37.9%,#5572df 42.6%,#5470de 44.1%,#5470de 48%,#536edd 49.6%,#536edd 52%,#5470de 53.5%,#5470de 57.4%,#5572df 59%,#5673e0 62.1%,#5875e1 63.7%,#5a78e4 67.6%,#5e7de7 71.5%,#5f7fe8 73.8%,#6384eb 77%,#6485ec 79.3%,#688aef 82.4%,#6a8bef 84.8%,#6c8ff1 87.9%,#6e90f2 89.5%,#7093f3 94.1%,#7093f3 95.7%,#7295f4 97.3%,#7295f4 100%)"></div>
<div style="top:431px;height:5px;background:linear-gradient(90deg,#7295f4 0%,#7295f4 3.5%,#7093f3 5.1%,#6f92f3 9%,#6e90f2 10.5%,#6c8ff1 12.9%,#6a8bef 16%,#6788ee 18.4%,#6687ed 20.7%,#6485ec 22.3%,#6180e9 26.2%,#5e7de7 28.5%,#5d7ce6 30.9%,#5a78e4 33.2%,#5977e3 36.3%,#5875e1 37.9%,#5673e0 41%,#5572df 45.7%,#5470de 47.3%,#5470de 54.3%,#5572df 55.9%,#5673e0 60.5%,#5875e1 62.1%,#5a78e4 66.8%,#5e7de7 70.7%,#5f7fe8 73%,#6282ea 75.4%,#6485ec 77.7%,#6788ee 81.6%,#6b8df0 84.8%,#6b8df0 86.3%,#6e90f2 88.7%,#7093f3 93.4%,#7093f3 95.7%,#7295f4 97.3%,#7295f4 100%)"></div>
<div style="top:436px;height:4px;background:linear-gradient(90deg,#7295f4 0%,#7295f4 3.5%,#7093f3 5.1%,#6f92f3 9.8%,#6c8ff1 12.1%,#6c8ff1 13.7%,#6a8bef 16.8%,#6788ee 19.1%,#6687ed 21.5%,#6485ec 23%,#6180e9 27%,#5e7de7 29.3%,#5d7ce6 31.6%,#5b7ae5 33.2%,#5977e3 37.9%,#5875e1 39.5%,#5673e0 42.6%,#5572df 55.9%,#5673e0 59%,#5875e1 60.5%,#5875e1 62.1%,#5a78e4 64.5%,#5a78e4 66%,#5e7de7 69.9%,#5f7fe8 72.3%,#6282ea 74.6%,#6485ec 77.7%,#6788ee 80.1%,#688aef 82.4%,#6b8df0 84.8%,#6c8ff1 87.1%,#6e90f2 88.7%,#7093f3 93.4%,#7093f3 95.7%,#7295f4 97.3%,#7295f4 100%)"></div>
<div style="top:440px;height:4px;background:linear-gradient(90deg,#7295f4 0%,#7295f4 3.5%,#7093f3 5.1%,#6f92f3 9.8%,#6e90f2 11.3%,#6c8ff1 13.7%,#6a8bef 16.8%,#6788ee 19.1%,#6687ed 21.5%,#6485ec 23%,#6180e9 27.7%,#5e7de7 30.1%,#5d7ce6 33.2%,#5a78e4 35.5%,#5977e3 39.5%,#5875e1 41%,#5875e1 42.6%,#5673e0 44.1%,#5673e0 57.4%,#5875e1 59%,#5875e1 60.5%,#5977e3 62.1%,#5a78e4 64.5%,#5b7ae5 66%,#5e7de7 69.9%,#6180e9 72.3%,#6485ec 77%,#688aef 81.6%,#6a8bef 83.2%,#6c8ff1 87.1%,#6e90f2 88.7%,#7093f3 93.4%,#7093f3 95.7%,#7295f4 97.3%,#7295f4 100%)"></div>
<div style="top:444px;height:5px;background:linear-gradient(90deg,#7295f4 0%,#7295f4 3.5%,#7093f3 5.1%,#6f92f3 9.8%,#6e90f2 11.3%,#6c8ff1 13.7%,#6b8df0 15.2%,#6a8bef 17.6%,#6788ee 19.9%,#6687ed 22.3%,#6485ec 23.8%,#6180e9 28.5%,#5e7de7 30.9%,#5d7ce6 34%,#5b7ae5 35.5%,#5977e3 40.2%,#5875e1 43.4%,#5875e1 45.7%,#5673e0 47.3%,#5673e0 53.5%,#5875e1 55.1%,#5875e1 58.2%,#5977e3 59.8%,#5a78e4 63.7%,#5d7ce6 66.8%,#5e7de7 69.1%,#6180e9 71.5%,#6485ec 76.2%,#6788ee 80.1%,#6a8bef 82.4%,#6c8ff1 86.3%,#6e90f2 88.7%,#6f92f3 90.2%,#7093f3 95.7%,#7295f4 97.3%,#7295f4 100%)"></div>
<div style="top:449px;height:4px;background:linear-gradient(90deg,#7295f4 0%,#7295f4 3.5%,#7093f3 5.1%,#6f92f3 10.5%,#6c8ff1 12.9%,#6c8ff1 14.5%,#6a8bef 17.6%,#688aef 19.1%,#6687ed 23%,#6485ec 24.6%,#6180e9 29.3%,#5e7de7 31.6%,#5d7ce6 35.5%,#5a78e4 37.9%,#5977e3 44.1%,#5875e1 45.7%,#5875e1 55.9%,#5977e3 57.4%,#5a78e4 62.1%,#5b7ae5 63.7%,#5e7de7 68.4%,#6180e9 70.7%,#6485ec 75.4%,#6788ee 79.3%,#6a8bef 81.6%,#6a8bef 83.2%,#6c8ff1 86.3%,#6e90f2 87.9%,#6f92f3 91%,#7093f3 94.9%,#7295f4 96.5%,#7295f4 100%)"></div>
<div style="top:453px;height:4px;background:linear-gradient(90deg,#7295f4 0%,#7295f4 3.5%,#7093f3 5.1%,#6f92f3 10.5%,#6e90f2 12.1%,#6c8ff1 14.5%,#6b8df0 16%,#6a8bef 18.4%,#6788ee 20.7%,#6687ed 23.8%,#6485ec 25.4%,#6180e9 30.1%,#5f7fe8 31.6%,#5d7ce6 36.3%,#5b7ae5 37.9%,#5b7ae5 39.5%,#5a78e4 41%,#5977e3 56.6%,#5a78e4 60.5%,#5b7ae5 62.1%,#5e7de7 66.8%,#5f7fe8 68.4%,#6180e9 70.7%,#6485ec 74.6%,#6788ee 79.3%,#6a8bef 81.6%,#6c8ff1 85.5%,#6e90f2 88.7%,#6f92f3 90.2%,#7093f3 94.9%,#7295f4 96.5%,#7295f4 100%)"></div>
<div style="top:457px;height:4px;background:linear-gradient(90deg,#7295f4 0%,#7295f4 4.3%,#7093f3 5.9%,#6f92f3 10.5%,#6e90f2 12.1%,#6c8ff1 15.2%,#6a8bef 18.4%,#688aef 20.7%,#6687ed 23%,#6384eb 27%,#6180e9 30.9%,#5f7fe8 33.2%,#5e7de7 34.8%,#5d7ce6 37.9%,#5b7ae5 39.5%,#5b7ae5 41%,#5a78e4 42.6%,#5a78e4 55.9%,#5a78e4 58.2%,#5b7ae5 59.8%,#5b7ae5 61.3%,#5d7ce6 62.9%,#5e7de7 66%,#6180e9 68.4%,#6180e9 69.9%,#6485ec 73.8%,#6788ee 78.5%,#6a8bef 80.9%,#6b8df0 84%,#6e90f2 86.3%,#6e90f2 87.9%,#6f92f3 89.5%,#7093f3 94.9%,#7295f4 96.5%,#7295f4 100%)"></div>
<div style="top:461px;height:5px;background:linear-gradient(90deg,#7295f4 0%,#7295f4 4.3%,#7093f3 5.9%,#6f92f3 11.3%,#6e90f2 12.9%,#6c8ff1 15.2%,#6b8df0 16.8%,#6a8bef 19.1%,#688aef 20.7%,#6687ed 24.6%,#6485ec 26.2%,#6384eb 28.5%,#6282ea 30.1%,#6180e9 32.4%,#5f7fe8 34%,#5d7ce6 38.7%,#5d7ce6 40.2%,#5b7ae5 41.8%,#5b7ae5 44.1%,#5a78e4 45.7%,#5a78e4 55.1%,#5b7ae5 56.6%,#5b7ae5 59%,#5d7ce6 60.5%,#5e7de7 64.5%,#5f7fe8 66%,#6180e9 68.4%,#6282ea 69.9%,#6485ec 74.6%,#6788ee 77%,#688aef 79.3%,#6a8bef 80.9%,#6c8ff1 84.8%,#6e90f2 87.9%,#6f92f3 89.5%,#7093f3 94.9%,#7295f4 96.5%,#7295f4 100%)"></div>
<div style="top:466px;height:4px;background:linear-gradient(90deg,#7295f4 0%,#7295f4 4.3%,#7093f3 5.9%,#6f92f3 11.3%,#6e90f2 12.9%,#6c8ff1 16%,#6b8df0 17.6%,#6a8bef 19.9%,#688aef 21.5%,#6687ed 25.4%,#6485ec 27%,#6384eb 29.3%,#6282ea 30.9%,#6180e9 34%,#5f7fe8 35.5%,#5e7de7 38.7%,#5d7ce6 42.6%,#5b7ae5 44.1%,#5b7ae5 56.6%,#5d7ce6 58.2%,#5e7de7 62.9%,#5f7fe8 64.5%,#6180e9 67.6%,#6282ea 69.1%,#6485ec 73%,#6687ed 74.6%,#6788ee 77%,#688aef 78.5%,#6a8bef 80.9%,#6b8df0 82.4%,#6c8ff1 84.8%,#6e90f2 86.3%,#6e90f2 87.9%,#6f92f3 89.5%,#7093f3 94.9%,#7295f4 96.5%,#7295f4 100%)"></div>
<div style="top:470px;height:4px;background:linear-gradient(90deg,#7295f4 0%,#7295f4 4.3%,#7093f3 5.9%,#6f92f3 12.1%,#6e90f2 13.7%,#6c8ff1 16.8%,#6a8bef 19.9%,#688aef 22.3%,#6788ee 23.8%,#6687ed 26.2%,#6485ec 27.7%,#6384eb 30.9%,#6282ea 32.4%,#6180e9 35.5%,#5f7fe8 37.1%,#5e7de7 40.2%,#5d7ce6 57.4%,#5e7de7 61.3%,#5f7fe8 62.9%,#6180e9 66%,#6282ea 67.6%,#6485ec 72.3%,#6687ed 73.8%,#6788ee 76.2%,#688aef 77.7%,#6a8bef 80.1%,#6b8df0 81.6%,#6c8ff1 84.8%,#6e90f2 86.3%,#6f92f3 89.5%,#7093f3 94.9%,#7295f4 96.5%,#7295f4 100%)"></div>
<div style="top:474px;height:5px;background:linear-gradient(90deg,#7295f4 0%,#7295f4 4.3%,#7093f3 5.9%,#6f92f3 12.1%,#6e90f2 13.7%,#6c8ff1 16.8%,#6b8df0 18.4%,#6a8bef 21.5%,#6788ee 23.8%,#6687ed 27.7%,#6485ec 29.3%,#6384eb 31.6%,#6282ea 33.2%,#6180e9 36.3%,#5f7fe8 39.5%,#5e7de7 42.6%,#5d7ce6 53.5%,#5e7de7 59%,#5f7fe8 60.5%,#5f7fe8 62.1%,#6180e9 63.7%,#6180e9 65.2%,#6282ea 66.8%,#6485ec 71.5%,#6687ed 73%,#6788ee 75.4%,#688aef 77%,#6a8bef 79.3%,#6b8df0 80.9%,#6c8ff1 84%,#6e90f2 85.5%,#6f92f3 88.7%,#7093f3 94.1%,#7295f4 95.7%,#7295f4 100%)"></div>
<div style="top:479px;height:4px;background:linear-gradient(90deg,#7295f4 0%,#7295f4 5.1%,#7093f3 6.6%,#6f92f3 12.9%,#6e90f2 14.5%,#6c8ff1 17.6%,#6b8df0 19.1%,#6a8bef 22.3%,#688aef 23.8%,#6687ed 28.5%,#6485ec 30.1%,#6384eb 33.2%,#6282ea 34.8%,#6282ea 36.3%,#6180e9 37.9%,#6180e9 39.5%,#5f7fe8 41%,#5f7fe8 44.1%,#5e7de7 45.7%,#5e7de7 55.9%,#5f7fe8 57.4%,#5f7fe8 59.8%,#6180e9 61.3%,#6180e9 62.9%,#6282ea 64.5%,#6282ea 66%,#6384eb 67.6%,#6485ec 70.7%,#6788ee 73%,#6788ee 74.6%,#688aef 76.2%,#6a8bef 79.3%,#6c8ff1 82.4%,#6e90f2 85.5%,#6f92f3 88.7%,#7093f3 94.1%,#7295f4 95.7%,#7295f4 100%)"></div>
<div style="top:483px;height:4px;background:linear-gradient(90deg,#7295f4 0%,#7295f4 5.1%,#7093f3 6.6%,#6f92f3 12.9%,#6e90f2 14.5%,#6e90f2 16%,#6c8ff1 17.6%,#6b8df0 20.7%,#6a8bef 22.3%,#688aef 25.4%,#6788ee 27%,#6687ed 30.1%,#6485ec 31.6%,#6384eb 34.8%,#6282ea 36.3%,#6282ea 37.9%,#6180e9 39.5%,#6180e9 42.6%,#5f7fe8 44.1%,#5f7fe8 56.6%,#6180e9 58.2%,#6180e9 61.3%,#6282ea 62.9%,#6282ea 64.5%,#6384eb 66%,#6485ec 69.1%,#6687ed 70.7%,#6788ee 73.8%,#688aef 75.4%,#6a8bef 78.5%,#6b8df0 80.1%,#6c8ff1 83.2%,#6e90f2 84.8%,#6f92f3 87.9%,#7093f3 94.1%,#7295f4 95.7%,#7295f4 100%)"></div>
<div style="top:487px;height:5px;background:linear-gradient(90deg,#7295f4 0%,#7295f4 5.1%,#7093f3 6.6%,#6f92f3 13.7%,#6e90f2 15.2%,#6e90f2 16.8%,#6c8ff1 18.4%,#6b8df0 21.5%,#6a8bef 23%,#688aef 26.2%,#6788ee 27.7%,#6687ed 31.6%,#6485ec 33.2%,#6384eb 37.1%,#6282ea 38.7%,#6282ea 41%,#6180e9 42.6%,#6180e9 58.2%,#6282ea 59.8%,#6282ea 62.1%,#6384eb 63.7%,#6485ec 67.6%,#6687ed 69.1%,#6788ee 73%,#688aef 74.6%,#6a8bef 77.7%,#6b8df0 79.3%,#6c8ff1 82.4%,#6e90f2 84%,#6e90f2 85.5%,#6f92f3 87.1%,#7093f3 93.4%,#7295f4 94.9%,#7295f4 100%)"></div>
<div style="top:492px;height:4px;background:linear-gradient(90deg,#7295f4 0%,#7295f4 5.9%,#7093f3 7.4%,#6f92f3 14.5%,#6e90f2 16%,#6e90f2 17.6%,#6c8ff1 19.1%,#6b8df0 22.3%,#6a8bef 23.8%,#6a8bef 25.4%,#688aef 27%,#6687ed 31.6%,#6687ed 33.2%,#6485ec 34.8%,#6384eb 40.2%,#6282ea 41.8%,#6282ea 46.5%,#6180e9 48%,#6180e9 52.7%,#6282ea 54.3%,#6282ea 59%,#6384eb 60.5%,#6485ec 66%,#6687ed 67.6%,#6788ee 71.5%,#688aef 73%,#6a8bef 76.2%,#6b8df0 77.7%,#6b8df0 79.3%,#6c8ff1 80.9%,#6e90f2 84%,#6f92f3 87.1%,#7093f3 93.4%,#7295f4 94.9%,#7295f4 100%)"></div>
<div style="top:496px;height:4px;background:linear-gradient(90deg,#7295f4 0%,#7295f4 5.9%,#7093f3 7.4%,#6f92f3 15.2%,#6e90f2 16.8%,#6e90f2 18.4%,#6c8ff1 19.9%,#6b8df0 23%,#6a8bef 26.2%,#688aef 27.7%,#688aef 29.3%,#6788ee 30.9%,#6687ed 34.8%,#6485ec 36.3%,#6384eb 44.1%,#6282ea 45.7%,#6282ea 55.1%,#6384eb 56.6%,#6485ec 64.5%,#6687ed 66%,#6788ee 69.9%,#688aef 71.5%,#688aef 73%,#6a8bef 74.6%,#6b8df0 77.7%,#6c8ff1 79.3%,#6c8ff1 80.9%,#6e90f2 82.4%,#6e90f2 84%,#6f92f3 85.5%,#7093f3 93.4%,#7295f4 94.9%,#7295f4 100%)"></div>
<div style="top:500px;height:5px;background:linear-gradient(90deg,#7295f4 0%,#7295f4 6.6%,#7093f3 8.2%,#6f92f3 16%,#6e90f2 17.6%,#6e90f2 19.1%,#6c8ff1 20.7%,#6c8ff1 22.3%,#6b8df0 23.8%,#6a8bef 27%,#688aef 30.1%,#6788ee 33.2%,#6687ed 37.9%,#6485ec 39.5%,#6384eb 56.6%,#6485ec 61.3%,#6687ed 62.9%,#6788ee 68.4%,#688aef 69.9%,#688aef 71.5%,#6a8bef 73%,#6b8df0 76.2%,#6c8ff1 79.3%,#6e90f2 82.4%,#6f92f3 85.5%,#7093f3 92.6%,#7295f4 94.1%,#7295f4 100%)"></div>
<div style="top:505px;height:4px;background:linear-gradient(90deg,#7295f4 0%,#7295f4 6.6%,#7093f3 8.2%,#6f92f3 16.8%,#6e90f2 18.4%,#6e90f2 19.9%,#6c8ff1 21.5%,#6c8ff1 23%,#6b8df0 24.6%,#6b8df0 26.2%,#6a8bef 27.7%,#6a8bef 29.3%,#688aef 30.9%,#688aef 32.4%,#6788ee 34%,#6687ed 41.8%,#6485ec 43.4%,#6485ec 57.4%,#6687ed 59%,#6788ee 66%,#688aef 67.6%,#688aef 69.9%,#6a8bef 71.5%,#6a8bef 73%,#6b8df0 74.6%,#6b8df0 76.2%,#6c8ff1 77.7%,#6c8ff1 79.3%,#6e90f2 80.9%,#6e90f2 82.4%,#6f92f3 84%,#7093f3 91.8%,#7295f4 93.4%,#7295f4 100%)"></div>
<div style="top:509px;height:4px;background:linear-gradient(90deg,#7295f4 0%,#7295f4 7.4%,#7093f3 9%,#6f92f3 17.6%,#6e90f2 19.1%,#6e90f2 21.5%,#6c8ff1 23%,#6c8ff1 24.6%,#6b8df0 26.2%,#6b8df0 27.7%,#6a8bef 29.3%,#6a8bef 31.6%,#688aef 33.2%,#688aef 35.5%,#6788ee 37.1%,#6788ee 59.8%,#6788ee 63.7%,#688aef 65.2%,#688aef 67.6%,#6a8bef 69.1%,#6a8bef 71.5%,#6b8df0 73%,#6b8df0 74.6%,#6c8ff1 76.2%,#6c8ff1 77.7%,#6e90f2 79.3%,#6e90f2 81.6%,#6f92f3 83.2%,#7093f3 91.8%,#7295f4 93.4%,#7295f4 100%)"></div>
<div style="top:513px;height:4px;background:linear-gradient(90deg,#7295f4 0%,#7295f4 8.2%,#7093f3 9.8%,#6f92f3 18.4%,#6e90f2 19.9%,#6e90f2 22.3%,#6c8ff1 23.8%,#6c8ff1 26.2%,#6b8df0 27.7%,#6b8df0 30.1%,#6a8bef 31.6%,#6a8bef 34%,#688aef 35.5%,#688aef 39.5%,#6788ee 41%,#6788ee 59.8%,#688aef 61.3%,#688aef 65.2%,#6a8bef 66.8%,#6a8bef 69.1%,#6b8df0 70.7%,#6b8df0 73%,#6c8ff1 74.6%,#6c8ff1 76.2%,#6e90f2 77.7%,#6e90f2 80.1%,#6f92f3 81.6%,#7093f3 91%,#7295f4 92.6%,#7295f4 100%)"></div>
<div style="top:517px;height:5px;background:linear-gradient(90deg,#7295f4 0%,#7295f4 9%,#7093f3 10.5%,#6f92f3 19.9%,#6e90f2 21.5%,#6e90f2 24.6%,#6c8ff1 26.2%,#6c8ff1 28.5%,#6b8df0 30.1%,#6b8df0 33.2%,#6a8bef 34.8%,#6a8bef 38.7%,#688aef 40.2%,#688aef 61.3%,#6a8bef 62.9%,#6a8bef 66%,#6b8df0 67.6%,#6b8df0 70.7%,#6c8ff1 72.3%,#6c8ff1 74.6%,#6e90f2 76.2%,#6e90f2 78.5%,#6f92f3 80.1%,#7093f3 90.2%,#7295f4 91.8%,#7295f4 100%)"></div>
<div style="top:522px;height:4px;background:linear-gradient(90deg,#7295f4 0%,#7295f4 9.8%,#7093f3 11.3%,#6f92f3 21.5%,#6e90f2 23%,#6e90f2 26.2%,#6c8ff1 27.7%,#6c8ff1 31.6%,#6b8df0 33.2%,#6b8df0 37.1%,#6a8bef 38.7%,#6a8bef 62.1%,#6b8df0 63.7%,#6b8df0 67.6%,#6c8ff1 69.1%,#6c8ff1 72.3%,#6e90f2 73.8%,#6e90f2 77%,#6f92f3 78.5%,#7093f3 89.5%,#7295f4 91%,#7295f4 100%)"></div>
<div style="top:526px;height:4px;background:linear-gradient(90deg,#7295f4 0%,#7295f4 10.5%,#7093f3 12.1%,#6f92f3 23.8%,#6e90f2 25.4%,#6e90f2 29.3%,#6c8ff1 30.9%,#6c8ff1 35.5%,#6b8df0 37.1%,#6b8df0 48%,#6a8bef 49.6%,#6a8bef 51.2%,#6b8df0 52.7%,#6b8df0 63.7%,#6c8ff1 65.2%,#6c8ff1 69.9%,#6e90f2 71.5%,#6e90f2 74.6%,#6f92f3 76.2%,#7093f3 87.9%,#7295f4 89.5%,#7295f4 100%)"></div>
<div style="top:530px;height:5px;background:linear-gradient(90deg,#7295f4 0%,#7295f4 12.1%,#7093f3 13.7%,#6f92f3 27%,#6e90f2 28.5%,#6e90f2 34%,#6c8ff1 35.5%,#6c8ff1 48%,#6b8df0 49.6%,#6b8df0 51.2%,#6c8ff1 52.7%,#6c8ff1 64.5%,#6e90f2 66%,#6e90f2 72.3%,#6f92f3 73.8%,#7093f3 87.1%,#7295f4 88.7%,#7295f4 100%)"></div>
<div style="top:535px;height:4px;background:linear-gradient(90deg,#7295f4 0%,#7295f4 13.7%,#7093f3 15.2%,#6f92f3 32.4%,#6e90f2 34%,#6e90f2 66.8%,#6f92f3 68.4%,#7093f3 85.5%,#7295f4 87.1%,#7295f4 100%)"></div>
<div style="top:539px;height:4px;background:linear-gradient(90deg,#7295f4 0%,#7295f4 16%,#7093f3 17.6%,#7093f3 71.5%,#7093f3 83.2%,#7295f4 84.8%,#7295f4 100%)"></div>
<div style="top:543px;height:5px;background:linear-gradient(90deg,#7295f4 0%,#7295f4 20.7%,#7093f3 22.3%,#7093f3 77.7%,#7295f4 79.3%,#7295f4 100%)"></div>
<div style="top:548px;height:4px;background:linear-gradient(90deg,#7295f4 0%,#7295f4 100%)"></div>
</div>

<div class="a" style="left:1166px;top:264px;width:16px;height:213px;background:linear-gradient(180deg,#b40426 0.0%,#c32e31 4.2%,#d1493f 8.3%,#dd5f4b 12.5%,#e7745b 16.7%,#ef886b 20.8%,#f4987a 25.0%,#f7a98b 29.2%,#f7b89c 33.3%,#f5c4ac 37.5%,#efcebd 41.7%,#e7d7ce 45.8%,#dddcdc 50.0%,#d2dbe8 54.2%,#c5d6f2 58.3%,#b9d0f9 62.5%,#aac7fd 66.7%,#9bbcff 70.8%,#8db0fe 75.0%,#7ea1fa 79.2%,#6f92f3 83.3%,#6282ea 87.5%,#5470de 91.7%,#465ecf 95.8%,#3b4cc0 100.0%)"></div>
<div class="a" style="left:1178px;top:263px;width:12px;height:1px;background:#f4f4f4"></div><div class="t vt" style="left:1196px;top:253px">1.0e+00</div>
<div class="a" style="left:1178px;top:299px;width:12px;height:1px;background:#f4f4f4"></div><div class="t vt" style="left:1196px;top:289px">0.8</div>
<div class="a" style="left:1178px;top:334px;width:12px;height:1px;background:#f4f4f4"></div><div class="t vt" style="left:1196px;top:325px">0.6</div>
<div class="a" style="left:1178px;top:369px;width:12px;height:1px;background:#f4f4f4"></div><div class="t vt" style="left:1196px;top:360px">0.4</div>
<div class="a" style="left:1178px;top:406px;width:12px;height:1px;background:#f4f4f4"></div><div class="t vt" style="left:1196px;top:395px">0.2</div>
<div class="a" style="left:1178px;top:441px;width:12px;height:1px;background:#f4f4f4"></div><div class="t vt" style="left:1196px;top:430px">0</div>
<div class="a" style="left:1178px;top:477px;width:12px;height:1px;background:#f4f4f4"></div><div class="t vt" style="left:1196px;top:466px">-2.1e-01</div>
<div class="t vt" style="left:1267.500px;top:370px;font-size:18px;transform:translate(-50%,-50%) rotate(-90deg);word-spacing:-4.500px">U X</div>

<svg class="gs" style="left:430px;top:570px" width="80" height="65" viewBox="430 570 80 65">
 <line x1="445.6" y1="586" x2="445.6" y2="620" stroke="#d6d60a" stroke-width="1.2"/>
 <path d="M445.6 578.6L442.8 586.8L448.6 586.8Z" fill="#e8e800"/>
 <path d="M442.8 586.2h5.8v1h-5.8z" fill="#6e6e10"/>
 <line x1="450" y1="623.4" x2="483" y2="623.4" stroke="#e00000" stroke-width="1.1"/>
 <path d="M490.6 623.2L482.4 620.2L482.4 626.2Z" fill="#e60000"/>
 <circle cx="445.8" cy="623" r="4" fill="#005c00"/>
 <text x="447" y="586.6" font-family="Liberation Sans,sans-serif" font-size="12.5" fill="#f2f2f2">Y</text>
 <text x="448" y="623.8" font-family="Liberation Sans,sans-serif" font-size="15" fill="#fff">Z</text>
 <text x="484.6" y="623.6" font-family="Liberation Sans,sans-serif" font-size="13" fill="#f2f2f2">X</text>
</svg>


<!-- status bar -->
<div class="btn" style="left:656px;top:712px;width:20px;height:19px"></div>
<svg style="left:662px;top:717px" width="8" height="8" viewBox="0 0 8 8"><path d="M1 1L7 7M7 1L1 7" stroke="#999" stroke-width="2.900"/></svg>
<svg style="left:1318px;top:718px" width="12" height="12" viewBox="0 0 12 12"><g fill="#b4b4b4"><rect x="9" y="1" width="1" height="1"/><rect x="6" y="4" width="1" height="1"/><rect x="9" y="4" width="1" height="1"/><rect x="3" y="7" width="1" height="1"/><rect x="6" y="7" width="1" height="1"/><rect x="9" y="7" width="1" height="1"/></g></svg>
<div class="a" style="left:678px;top:712px;width:633px;height:19px;border-top:1px solid #979797;border-left:1px solid #979797;border-right:1px solid #fff;border-bottom:1px solid #fff"></div>


</body></html>
